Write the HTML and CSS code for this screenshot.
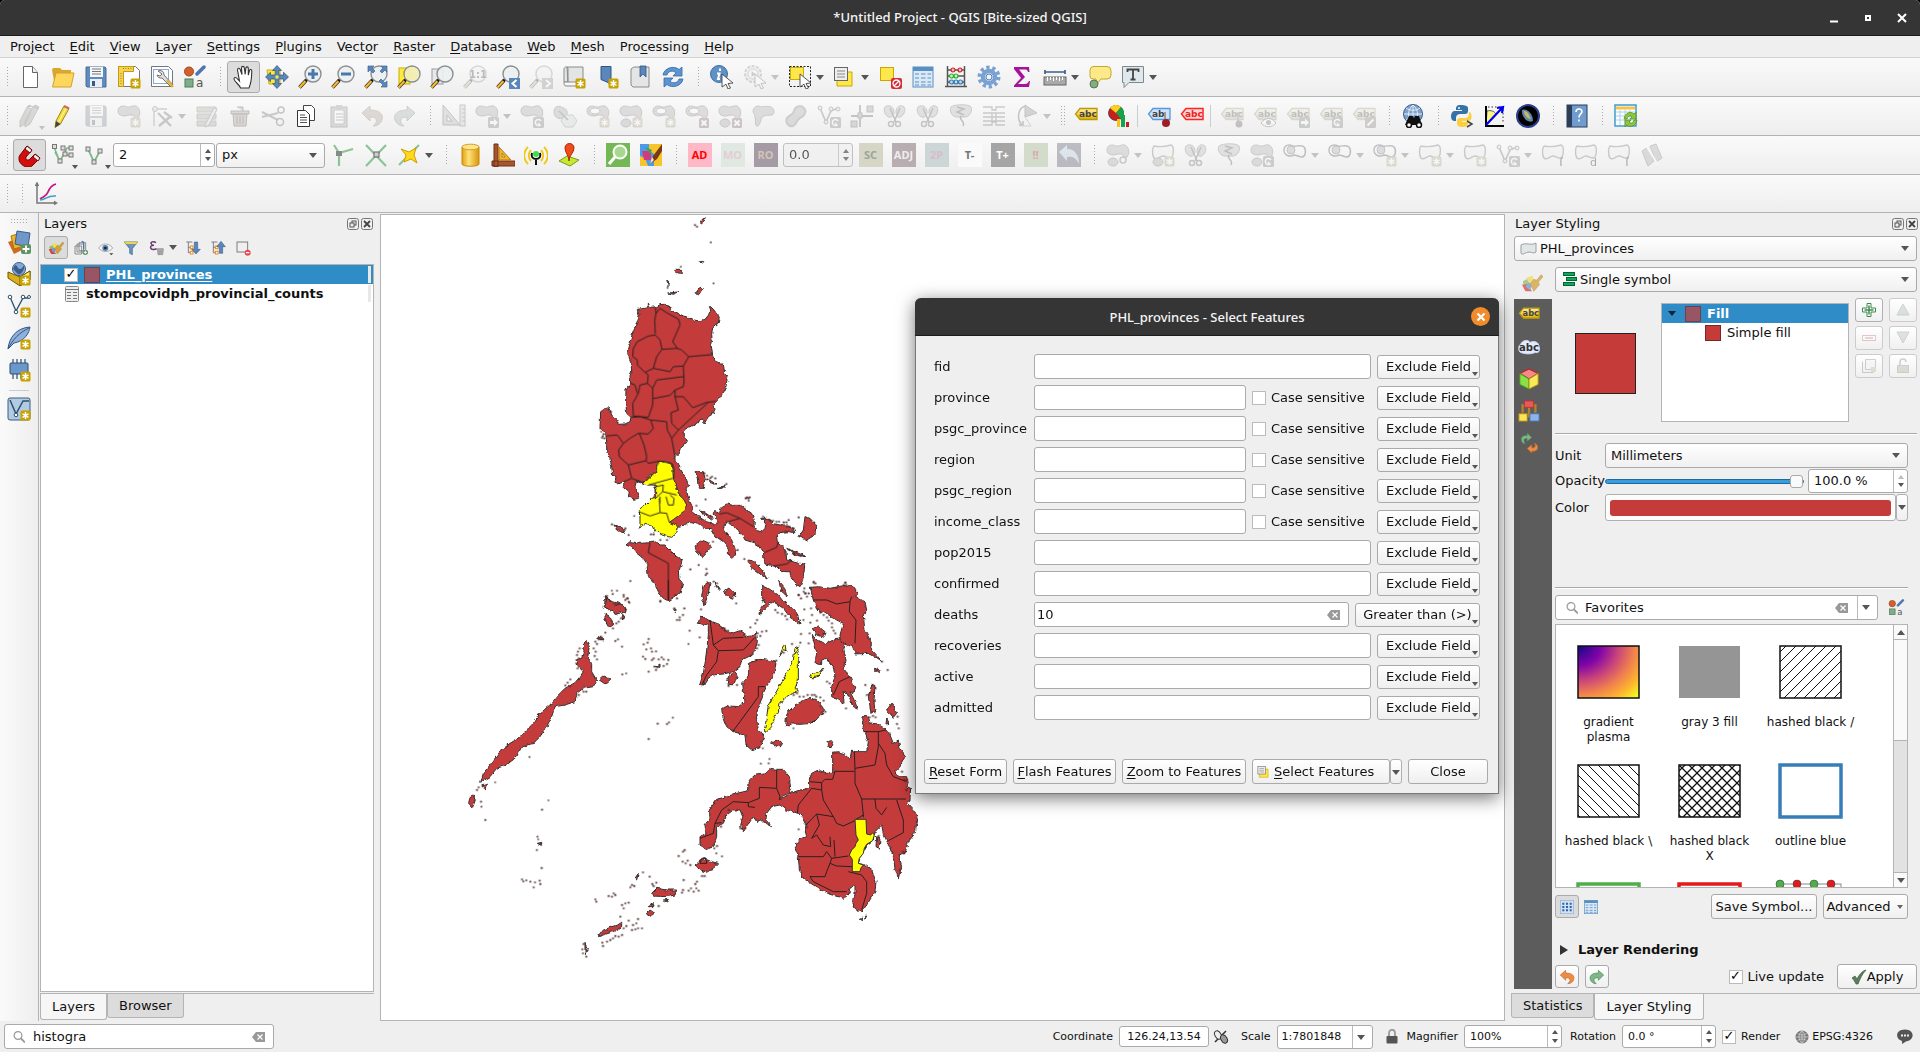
FILE: index.html
```html
<!DOCTYPE html>
<html lang="en">
<head>
<meta charset="utf-8">
<title>*Untitled Project - QGIS [Bite-sized QGIS]</title>
<link rel="stylesheet" href="styles.css">
</head>
<body>
<svg class="defs" aria-hidden="true">
<defs>
<linearGradient id="gy" x1="0" y1="0" x2="0" y2="1"><stop offset="0" stop-color="#fff0a8"/><stop offset="1" stop-color="#e0b000"/></linearGradient>
<linearGradient id="gcyl"><stop offset="0" stop-color="#e0a010"/><stop offset=".4" stop-color="#ffe27a"/><stop offset="1" stop-color="#d8960a"/></linearGradient>
<radialGradient id="plasma" cx="0" cy="0" r="1.35"><stop offset="0" stop-color="#15068a"/><stop offset=".28" stop-color="#8004a8"/><stop offset=".5" stop-color="#cb4679"/><stop offset=".68" stop-color="#f0804e"/><stop offset=".85" stop-color="#fdb42f"/><stop offset="1" stop-color="#f0f921"/></radialGradient>
<pattern id="hf" width="10" height="10" patternUnits="userSpaceOnUse"><path d="M-1 11L11 -1M-6 6L6 -6M4 16L16 4" stroke="#111" stroke-width="1"/></pattern>
<pattern id="hb" width="10" height="10" patternUnits="userSpaceOnUse"><path d="M-1 -1L11 11M-6 4L6 16M4 -6L16 6" stroke="#111" stroke-width="1"/></pattern>
<pattern id="hx" width="10" height="10" patternUnits="userSpaceOnUse"><path d="M-1 -1L11 11M-1 11L11 -1" stroke="#111" stroke-width="1.300"/></pattern>
</defs>
<symbol id="star" viewBox="0 0 24 24"><rect x="13.500" y="13.500" width="10" height="10" rx="1.500" fill="#c8a200"/><path d="M18.500 15v7M15.500 16.800l6 3.500M21.500 16.800l-6 3.500" stroke="#fff" stroke-width="1.500"/></symbol>
<symbol id="bx" viewBox="0 0 24 24"><rect x="14" y="14" width="10" height="10" rx="1.500" fill="#c84848"/><path d="M16.500 16.500l5 5M21.500 16.500l-5 5" stroke="#fff" stroke-width="2"/></symbol>
<symbol id="bmove" viewBox="0 0 24 24"><rect x="13" y="13" width="11" height="11" rx="1.500" fill="#6c7a70"/><path d="M15 17h4v-2.500l4 4-4 4V20h-4z" fill="#fff"/></symbol>
<symbol id="brot" viewBox="0 0 24 24"><rect x="13" y="13" width="11" height="11" rx="1.500" fill="#6c7a70"/><path d="M21 17a3 3 0 1 0-1 4l-2-2" stroke="#fff" stroke-width="1.500" fill="none"/></symbol>
<symbol id="bedit" viewBox="0 0 24 24"><rect x="13" y="13" width="11" height="11" rx="1.500" fill="#7a7a5c"/><path d="M15.500 21.500l6-6" stroke="#fff" stroke-width="2.200"/></symbol>
<symbol id="page" viewBox="0 0 24 24"><path d="M5.500 1.500h9l5 6v15h-14z" fill="#fff" stroke="#666"/><path d="M14.500 1.500v6h5" fill="#eee" stroke="#666"/></symbol>
<symbol id="folder" viewBox="0 0 24 24"><path d="M1 5l1-2h7l2 2h9v4l-16 12z" fill="#d9a72e"/><path d="M5 8h18l-3 14H1.500z" fill="#fdd65c" stroke="#d7a02a"/></symbol>
<symbol id="floppy" viewBox="0 0 24 24"><path d="M2 2h19l1 1v19H3l-1-1z" fill="#5f8cc0" stroke="#4a6d95"/><rect x="6" y="2" width="13" height="10" fill="#f4f6f8"/><path d="M8 4h9M8 6.500h9M8 9h9" stroke="#777" stroke-width="1.200"/><rect x="6" y="14" width="12" height="8" fill="#e9eef4"/><rect x="8" y="16" width="3" height="5" fill="#3c5a80"/></symbol>
<symbol id="layout" viewBox="0 0 24 24"><path d="M1.500 1.500h17l4 4v16h-21z" fill="#fff" stroke="#777"/><path d="M1.500 1.500h15v5h-10v15h-5z" fill="#f5d355" stroke="#c39a10"/><path d="M6 3.500h9M4 8v11" stroke="#a67c00" stroke-dasharray="1 1.500"/></symbol>
<symbol id="layouts" viewBox="0 0 24 24"><path d="M1.500 1.500h17l4 4v16h-21z" fill="#fff" stroke="#777"/><rect x="3.500" y="4.500" width="15" height="14" fill="none" stroke="#88aadd"/><path d="M8 6a4 4 0 0 1 6 4l9 10-2 2-9-9a4 4 0 0 1-5-3l3 1 2-2z" fill="#ddd" stroke="#555" stroke-width=".8"/><path d="M17 15l6 7" stroke="#e2b33a" stroke-width="2.500"/></symbol>
<symbol id="style" viewBox="0 0 24 24"><circle cx="6" cy="6.500" r="4.500" fill="#d2602d" stroke="#a04418"/><path d="M14 9l7-7" stroke="#4d77ae" stroke-width="3.500" stroke-linecap="round"/><rect x="2" y="14" width="8" height="8" fill="#7fae88" stroke="#4d7c57"/><text x="13" y="22" font-size="12" fill="#555">a</text></symbol>
<symbol id="hand" viewBox="0 0 24 24"><path d="M8.500 23c-.5-3-6-6-6.500-9 0-2 2-2 3.500 0l2 2L5.500 5c0-2 2-2.300 2.700-.5l1.800 5-.5-6.500c0-2 2.500-2.200 2.800-.2l.9 6.500.6-6c.3-2 2.500-1.800 2.500.2v6.500l1.200-4.500c.5-1.600 2.500-1.200 2.300.5C19.500 11 20 16 17 23z" fill="#fff" stroke="#333" stroke-width="1.100"/></symbol>
<symbol id="pan" viewBox="0 0 24 24"><path d="M2 5h13v14H4z" fill="#fdea3d" stroke="#c9ad00"/><path d="M12 .5l4.500 5h-2.700V10h4.700V7.200l5 4.800-5 4.800V14h-4.700v4.500h2.700l-4.500 5-4.500-5h2.700V14H5.500v2.800L.5 12l5-4.800V10h4.700V5.500H7.500z" fill="#5a86bb" stroke="#2f5682" stroke-width=".7"/><rect x="10.500" y="10.500" width="3" height="3" fill="#fdea3d"/></symbol>
<symbol id="lens" viewBox="0 0 24 24"><path d="M1.500 22.500l6.500-7" stroke="#333" stroke-width="3.600"/><path d="M1.500 22.500l6-6.500" stroke="#fbb829" stroke-width="2.200"/><path d="M7.500 16l2-2" stroke="#111" stroke-width="3"/><circle cx="15" cy="9" r="8" fill="#eceff0" fill-opacity=".9" stroke="#8a8f92" stroke-width="1.400"/></symbol>
<symbol id="plus" viewBox="0 0 24 24"><path d="M15 4v10M10 9h10" stroke="#4678ad" stroke-width="3"/></symbol>
<symbol id="minus" viewBox="0 0 24 24"><path d="M10 9h10" stroke="#4678ad" stroke-width="3"/></symbol>
<symbol id="full" viewBox="0 0 24 24"><path d="M4 1h6L8 3l3 3-2 2-3-3-2 2zM23 1v6l-2-2-3 3-2-2 3-3-2-2zM23 22h-6l2-2-4-4 2-2 4 4 2-2z" fill="#5a86bb" stroke="#3d6797" stroke-width=".7"/></symbol>
<symbol id="zsel" viewBox="0 0 24 24"><rect x="2" y="3" width="11" height="16" fill="#fdea3d" stroke="#c9ad00"/></symbol>
<symbol id="lensy" viewBox="0 0 24 24"><circle cx="15" cy="9" r="7" fill="#f6ec9a" fill-opacity=".7"/></symbol>
<symbol id="zlay" viewBox="0 0 24 24"><rect x="2" y="4" width="11" height="15" fill="#e8e8e8" stroke="#999"/></symbol>
<symbol id="lt" viewBox="0 0 24 24"><rect x="13" y="13" width="11" height="11" fill="#5a86bb"/><path d="M20.500 15l-4 3.500 4 3.500" fill="none" stroke="#fff" stroke-width="2"/></symbol>
<symbol id="gt" viewBox="0 0 24 24"><rect x="13" y="13" width="11" height="11" fill="#888"/><path d="M17 15l4 3.500-4 3.500" fill="none" stroke="#fff" stroke-width="2"/></symbol>
<symbol id="roll" viewBox="0 0 24 24"><path d="M5 2h16v18H6zM2 4c0-2 3-3 4-1v14H2z" fill="#e3e4e4" stroke="#8b8b8b"/><path d="M2 17h15c2 0 2 4 0 4H4c-2 0-2-2-2-4z" fill="#f6f6f6" stroke="#8b8b8b"/></symbol>
<symbol id="mark" viewBox="0 0 24 24"><path d="M6 1.500h10v19l-3-3-7-3z" fill="#5a86bb" stroke="#2f5682"/></symbol>
<symbol id="book" viewBox="0 0 24 24"><path d="M3 4l3-2h15v20H5l-2-2z" fill="#e3e5e6" stroke="#8b8b8b"/><path d="M12 1h6v11l-3-3-3 3z" fill="#5a86bb" stroke="#2f5682" stroke-width=".8"/></symbol>
<symbol id="refresh" viewBox="0 0 24 24"><path d="M2 10C3 3 13 0 18 4.500L21 2v9h-9l3-3.200C12 5 7 6 6 10z" fill="#5b93d3" stroke="#3a6ba5" stroke-width=".8"/><path d="M22 14c-1 7-11 10-16 5.500L3 22v-9h9l-3 3.200C12 19 17 18 18 14z" fill="#5b93d3" stroke="#3a6ba5" stroke-width=".8"/></symbol>
<symbol id="cur" viewBox="0 0 24 24"><path d="M12 9l11 9-5 .500 2.500 4.500-2.500 1-2-4.800-4 2.800z" fill="#fff" stroke="#444" stroke-width=".9"/></symbol>
<symbol id="info" viewBox="0 0 24 24"><circle cx="9" cy="9" r="8.500" fill="#5f91c7" stroke="#41709f"/><path d="M10 3.500v2.500M7 8.500h2.500L8 14h2" stroke="#fff" stroke-width="2" fill="none"/></symbol>
<symbol id="gear" viewBox="0 0 24 24"><circle cx="12" cy="12" r="9.500" fill="none" stroke="#7ba0d2" stroke-width="4" stroke-dasharray="3.200 2.770"/><circle cx="12" cy="12" r="6" fill="#fff" stroke="#7ba0d2" stroke-width="4.500"/><circle cx="12" cy="12" r="3" fill="#f4f4f4" stroke="#4d7dbb"/></symbol>
<symbol id="gear2" viewBox="0 0 24 24"><circle cx="10" cy="9" r="8" fill="#ddd" stroke="#888" stroke-width="2" stroke-dasharray="3 1.500"/><circle cx="10" cy="9" r="5" fill="#f6f6f6" stroke="#888"/><path d="M8.500 6l4 3-4 3z" fill="#777"/></symbol>
<symbol id="sel" viewBox="0 0 24 24"><rect x="1.500" y="1.500" width="21" height="20" fill="none" stroke="#222" stroke-dasharray="2 1.500"/><rect x="2.500" y="2.500" width="13" height="12" fill="#fde74c" stroke="#c9ad00"/></symbol>
<symbol id="selv" viewBox="0 0 24 24"><path d="M8 7h11v14H4V14z" fill="#fde74c" stroke="#c9a800"/><rect x="1.500" y="2.500" width="13" height="13" fill="#eee" stroke="#666"/><path d="M4 6h8M4 9h8M4 12h8" stroke="#888"/></symbol>
<symbol id="desel" viewBox="0 0 24 24"><rect x="2.500" y="2.500" width="13" height="13" fill="#fde74c" stroke="#c9a800"/><rect x="13" y="13" width="11" height="11" rx="2" fill="#d62b36"/><circle cx="18.500" cy="18.500" r="3.500" fill="none" stroke="#fff" stroke-width="1.300"/><path d="M16 21l5-5" stroke="#fff" stroke-width="1.300"/></symbol>
<symbol id="table" viewBox="0 0 24 24"><rect x="2" y="2" width="20" height="20" fill="#dbe8f5" stroke="#5a8fc4"/><path d="M2 4h20" stroke="#5a8fc4" stroke-width="4"/><path d="M4 9h4M10 9h4.500M16.500 9H20M4 13h4M10 13h4.500M16.500 13H20M4 17h4M10 17h4.500M16.500 17H20M4 20h4M10 20h4.500M16.500 20H20" stroke="#5a8fc4" stroke-width="1.200"/></symbol>
<symbol id="abacus" viewBox="0 0 24 24"><path d="M3.500 1v20M20.500 1v20M1 21.500h22M3 5h18M3 11h18M3 17h18" stroke="#555" stroke-width="1.500"/><g stroke-width="1.200"><g fill="#fbb" stroke="#c22"><circle cx="9" cy="5" r="2"/><circle cx="16" cy="5" r="2"/></g><g fill="#bfb" stroke="#3a3"><circle cx="7.500" cy="11" r="2"/><circle cx="12" cy="11" r="2"/></g><g fill="#bdf" stroke="#37a"><circle cx="7.500" cy="17" r="2"/><circle cx="12" cy="17" r="2"/><circle cx="16.500" cy="17" r="2"/></g></g></symbol>
<symbol id="sigma" viewBox="0 0 24 24"><path d="M4 2h15l.5 5H18c-.5-2-1.500-2.500-3-2.500H9L15 12l-7 7h7c2 0 3-1 4-3h1l-1 6H4v-1.500L11 13 4 4z" fill="#a6129b"/></symbol>
<symbol id="ruler" viewBox="0 0 24 24"><path d="M1.500 7h21M2 5v4M22 5v4" stroke="#3d5f8a" stroke-width="1.700"/><rect x="1" y="12" width="22" height="8" fill="#aaa" stroke="#666"/><path d="M4.500 12v4M7.500 12v3M10.500 12v4M13.500 12v3M16.500 12v4M19.500 12v3" stroke="#fff"/></symbol>
<symbol id="tip" viewBox="0 0 24 24"><path d="M5 1.500h14a4 4 0 0 1 4 4V10a4 4 0 0 1-4 4h-6l-5 6v-6H5a3 3 0 0 1-3-3V5a4 4 0 0 1 3-3.500z" fill="#fbe98a" stroke="#c6a828"/><circle cx="6" cy="19" r="4" fill="#7fb07f" stroke="#5f6f5f"/></symbol>
<symbol id="tnote" viewBox="0 0 24 24"><path d="M1.500 1.500h21v16H8l-5 5v-5H1.500z" fill="#dfe8ec" stroke="#7c8a90"/><path d="M6.500 7V4.500h11V7M12 4.500v10M9.500 14.500h5" stroke="#444" stroke-width="1.800" fill="none"/></symbol>
<symbol id="pencil" viewBox="0 0 24 24"><path d="M5 17L13 2l5 2.500L9.500 20 4 23.500z" fill="#f4dc3c" stroke="#9c8a20"/><path d="M15.500 3.500L7.500 18" stroke="#fff8b0"/><path d="M5 17l4.500 3L4 23.500z" fill="#444"/><path d="M13 2l5 2.500" stroke="#c66" stroke-width="2"/></symbol>
<symbol id="pencils" viewBox="0 0 24 24"><path d="M2 17L9 3l5 2L7 20l-5 3zM7 17l8-14 5 2-8 15-5 3z" fill="#997" stroke="#665"/><path d="M9 3l2-2 4 2M15 3l2-2 4 2-1 2" fill="#866" stroke="#655"/></symbol>
<symbol id="blob" viewBox="0 0 24 24"><path d="M1 7c0-5 5-6 9-4 3 1 5-2 9-1 4 2 5 8 2 12-2 2-4 0-4-2 0-1-3-1-5-1C7 13 1 12 1 7z" fill="#9aa69a" stroke="#586858"/></symbol>
<symbol id="vertex" viewBox="0 0 24 24"><path d="M4 5h13M4 5v17" stroke="#777" stroke-width="1.300"/><circle cx="5" cy="5" r="2.500" fill="#ccc" stroke="#666"/><path d="M8 9l13 13M21 12L9 22M14 8l8 6" stroke="#665" stroke-width="2.400"/></symbol>
<symbol id="multi" viewBox="0 0 24 24"><path d="M2 3h19v5H2zM2 10h19v5H2zM2 17h19v5H2z" fill="#aaa87a" stroke="#776"/><path d="M10 21l9-17 3 1-8 16-4 2z" fill="#ddd" stroke="#666"/></symbol>
<symbol id="trash" viewBox="0 0 24 24"><path d="M3 7h18v3H3zM5 10h14l-1 12H6zM9 3h6v4" fill="#c88" stroke="#733"/><path d="M9 12v8M12 12v8M15 12v8" stroke="#733"/></symbol>
<symbol id="cut" viewBox="0 0 24 24"><path d="M1 8l16 8M1 13l16-4" stroke="#666" stroke-width="2"/><circle cx="20" cy="6" r="3" fill="none" stroke="#844" stroke-width="1.500"/><circle cx="19" cy="18" r="3.500" fill="none" stroke="#844" stroke-width="1.500"/></symbol>
<symbol id="copy" viewBox="0 0 24 24"><path d="M9.500 1.500h8l3 3v12h-11z" fill="#fff" stroke="#444"/><path d="M3.500 6.500h8l4 4v12h-12z" fill="#fff" stroke="#333"/><path d="M6 11h5M6 13.500h7M6 16h7M6 18.500h7" stroke="#555"/></symbol>
<symbol id="paste" viewBox="0 0 24 24"><rect x="4" y="3" width="16" height="20" fill="#b99" stroke="#655"/><path d="M7 6h10v14H7z" fill="#fff" stroke="#777"/><path d="M9 1h6v4H9z" fill="#888"/><path d="M9 10h7M9 13h7M9 16h7" stroke="#666"/></symbol>
<symbol id="undo" viewBox="0 0 24 24"><path d="M2 9l8-7v4c9 0 14 4 12 10-1 3-4 6-9 6 5-4 5-9-3-9v4z" fill="#ed8a45" stroke="#c3692b"/></symbol>
<symbol id="redo" viewBox="0 0 24 24"><path d="M22 9l-8-7v4C5 6 0 10 2 16c1 3 4 6 9 6-5-4-5-9 3-9v4z" fill="#7db787" stroke="#4f8a5b"/></symbol>
<symbol id="setsq" viewBox="0 0 24 24"><path d="M1 1l17 20H1zM5 11v6h5z" fill="#caa" fill-rule="evenodd" stroke="#555"/><rect x="18" y="1" width="5" height="21" fill="#ccc" stroke="#666"/><path d="M20 5h3M20 9h3M20 13h3M20 17h3" stroke="#666"/></symbol>
<symbol id="hex" viewBox="0 0 24 24"><path d="M1 8c0-6 5-7 9-4 4 0 6 6 2 9-3 3-11 2-11-5z" fill="#9aa69a" stroke="#586858"/><path d="M12 11h8l4 6-4 6h-8l-4-6z" fill="#ccd6e0" stroke="#789"/><path d="M6 7l9 9" stroke="#456" stroke-width="1.500"/></symbol>
<symbol id="hole" viewBox="0 0 24 24"><ellipse cx="9" cy="7" rx="5" ry="3" fill="#fff" stroke="#586858"/></symbol>
<symbol id="blob2" viewBox="0 0 24 24"><ellipse cx="7" cy="19" rx="5" ry="4" fill="#9aa69a" stroke="#586858"/></symbol>
<symbol id="bend" viewBox="0 0 24 24"><path d="M2 8c0-6 5-7 9-5 4-1 12-2 12 5 0 5-6 2-10 4-4 1-3 10-7 10-3 0 0-10-4-14z" fill="#9aa69a" stroke="#586858"/></symbol>
<symbol id="bean" viewBox="0 0 24 24"><path d="M3 14c-2 4 1 9 6 8 4-1 3-6 7-8 5-2 7-7 4-10-4-4-9-1-10 3-1 4-5 4-7 7z" fill="#9aa69a" stroke="#776" stroke-width="2"/></symbol>
<symbol id="vnet" viewBox="0 0 24 24"><path d="M3 4l6 14 5-11 7-3" stroke="#586858" stroke-width="1.700" fill="none"/><g fill="#ddd" stroke="#555"><circle cx="3" cy="4" r="2"/><circle cx="9" cy="18" r="2"/><circle cx="14" cy="5" r="2"/><circle cx="21" cy="5" r="2"/></g></symbol>
<symbol id="cross" viewBox="0 0 24 24"><path d="M10 1v22M1 12h22" stroke="#555" stroke-width="1.800"/><g fill="#999" stroke="#555"><rect x="8" y="9" width="4" height="5"/><rect x="17" y="2" width="6" height="6"/><rect x="1" y="17" width="6" height="6"/></g></symbol>
<symbol id="split" viewBox="0 0 24 24"><path d="M2 3c4-3 9 0 9 5 0 4-3 6-5 5-4-1-6-7-4-10zM21 3c-4-3-8 0-8 5 0 4 2 6 4 5 4-1 6-7 4-10z" fill="#aab6aa" stroke="#586858"/><path d="M7 4l6 14M17 4l-6 14" stroke="#555" stroke-width="1.600"/><circle cx="8" cy="20" r="2.500" fill="none" stroke="#755" stroke-width="1.500"/><circle cx="15" cy="20" r="2.500" fill="none" stroke="#755" stroke-width="1.500"/></symbol>
<symbol id="merge" viewBox="0 0 24 24"><path d="M2 3c4-3 18-3 20 0 2 4-2 10-6 10l-8 0C3 13 0 7 2 3z" fill="#aab6aa" stroke="#586858"/><path d="M8 3l7 2-7 3 7 3M12 12c-3 4 5 5 2 10" stroke="#444" stroke-width="1.400" fill="none"/></symbol>
<symbol id="mattr" viewBox="0 0 24 24"><path d="M1 3h9v3h4V3h9M1 9h22M1 13h22M1 17h22M1 21h9v-3h4v3h9M10 9v8M14 9v8" stroke="#666" stroke-width="1.300" fill="none"/></symbol>
<symbol id="rotp" viewBox="0 0 24 24"><path d="M10 2C2 5 2 16 7 21M4 21h4v-4" fill="none" stroke="#555" stroke-width="1.500"/><path d="M10 1l12 8-12 4z" fill="#888" stroke="#555"/><path d="M10 13l6 9H5" fill="none" stroke="#888"/></symbol>
<symbol id="abc" viewBox="0 0 24 24"><path d="M6 4.500h17v11H6L1.500 10z" fill="url(#gy)" stroke="#bc9800" stroke-width="1.300"/><text x="5" y="13" font-size="9" font-weight="bold" fill="#444">abc</text></symbol>
<symbol id="abcb" viewBox="0 0 24 24"><path d="M6 4.500h17v11H6L1.500 10z" fill="#cde3fb" stroke="#5a96d8" stroke-width="1.300"/><text x="5" y="13" font-size="9" font-weight="bold" fill="#444">ab</text><path d="M18 8v10" stroke="#999" stroke-width="2"/><circle cx="19" cy="19" r="4" fill="#9c1f24"/></symbol>
<symbol id="abcr" viewBox="0 0 24 24"><path d="M6 4.500h17v11H6L1.500 10z" fill="#ffd6d6" stroke="#f22" stroke-width="1.500"/><text x="5" y="13" font-size="9" font-weight="bold" fill="#e22">abc</text></symbol>
<symbol id="pie" viewBox="0 0 24 24"><circle cx="9" cy="9" r="7.500" fill="#c61f1f" stroke="#333" stroke-width=".7"/><path d="M9 9L3 4a7.500 7.500 0 0 1 11-1z" fill="#fbd21c"/><path d="M9 9l5-6a7.500 7.500 0 0 1 0 12z" fill="#16a34a"/><path d="M11.500 23v-8" stroke="#fbbf1c" stroke-width="3"/><path d="M16 23V11" stroke="#16a34a" stroke-width="4"/><path d="M20.500 23v-5" stroke="#c61f1f" stroke-width="3"/></symbol>
<symbol id="pin" viewBox="0 0 24 24"><path d="M18 8v10" stroke="#777" stroke-width="2"/><circle cx="19" cy="20" r="3.500" fill="#844"/></symbol>
<symbol id="eye" viewBox="0 0 24 24"><path d="M8 19c4-6 11-6 15 0-4 5-11 5-15 0z" fill="#fff" stroke="#555"/><circle cx="15.500" cy="18.500" r="2.500" fill="#567"/></symbol>
<symbol id="search3" viewBox="0 0 24 24"><circle cx="12" cy="10" r="9.500" fill="#7da2cc" stroke="#3a5c86"/><path d="M3 10h18M12 1v18M5 4c4 3 10 3 14 0M5 16c4-3 10-3 14 0M12 1c-6 5-6 13 0 18M12 1c6 5 6 13 0 18" fill="none" stroke="#e4eefa"/><path d="M8 12h4l1 2 1-2h4l3 9H4z" fill="#111"/><g fill="#fff" stroke="#111" stroke-width="1.500"><circle cx="8" cy="21" r="2.500"/><circle cx="18" cy="21" r="2.500"/></g></symbol>
<symbol id="python" viewBox="0 0 24 24"><path d="M11 1c-5 0-5 2-5 5h6v1H4c-4 1-4 10 0 10h2v-3c0-3 2-4 4-4h5c2 0 3-1 3-3V4c0-2-3-3-7-3z" fill="#3572a5"/><path d="M12 23c5 0 6-2 6-5h-6v-1h7c4-1 3-9 0-9v2c0 3-2 4-4 4h-5c-2 0-3 1-3 3v3c0 2 2 3 5 3z" fill="#fccf3e"/><circle cx="9" cy="4" r="1" fill="#fff"/><path d="M17 17l5 3-5 3" fill="none" stroke="#444" stroke-width="1.500"/></symbol>
<symbol id="axis" viewBox="0 0 24 24"><path d="M3 21l1-14c4-1 7 0 9 3z" fill="#fdf486" stroke="#333" stroke-width=".8"/><path d="M3 2v20h18" stroke="#000" stroke-width="2" fill="none"/><path d="M5 3h15v16" stroke="#333" stroke-dasharray="1.500 2" fill="none"/><path d="M3 21L20 3M14 4l6-1-1 6" stroke="#00e" stroke-width="2.200" fill="none"/></symbol>
<symbol id="globe" viewBox="0 0 24 24"><circle cx="12" cy="12" r="11" fill="#000" stroke="#2b3f8c" stroke-width="2"/><path d="M6 6c5-2 11 4 11 11-6 3-12-5-11-11z" fill="#5c87a8"/><path d="M8 7c4 0 5 4 7 8-4 0-7-4-7-8z" fill="#c8b56a"/></symbol>
<symbol id="help" viewBox="0 0 24 24"><rect x="2" y="1" width="20" height="22" fill="#6f9bce" stroke="#2a3f57"/><path d="M4.500 1v22" stroke="#2a3f57" stroke-width="5"/><path d="M11 8c0-4 6-4 6-.500 0 2.500-3 2.500-3 6M14 15.500v2" stroke="#fff" stroke-width="1.600" fill="none"/></symbol>
<symbol id="tref" viewBox="0 0 24 24"><rect x="1" y="1" width="21" height="21" fill="#fff" stroke="#3e9cc9" stroke-width="1.500"/><path d="M2 4h19" stroke="#f6c34d" stroke-width="3"/><path d="M2 8h19M2 12h19M2 16h19M6 6v15M11 6v15M16 6v15" stroke="#a8d2ec"/><path d="M10 15c1-7 7-8 10-5l2-2v7h-6l2-2c-2-2-4-1-5 2zM23 16c-1 6-7 8-10 5l-2 2v-7h6l-2 2c2 2 4 1 5-2z" fill="#8cc63f" stroke="#5b9122" stroke-width=".8"/></symbol>
<symbol id="magnet" viewBox="0 0 24 24"><path d="M2 12l7-9 5 4-6 7c-1 3 2 4 4 2l5-5 5 4-8 8C6 27-2 18 2 12z" fill="#d40d0d" stroke="#700"/><path d="M9 3l5 4-2 3-5-4zM17 11l5 4-2 3-5-4z" fill="#eee" stroke="#700"/></symbol>
<symbol id="snapn" viewBox="0 0 24 24"><path d="M3 4l6 15 4-9M4 9l5 9 7-13 6 0M13 12h8" stroke="#7fb88b" stroke-width="1.600" fill="none"/><g fill="#ddd" stroke="#777"><rect x="1.500" y="1.500" width="4" height="4"/><rect x="7" y="16" width="4" height="4"/><rect x="10" y="3" width="4" height="4"/><rect x="18" y="3" width="4" height="4"/><rect x="12" y="9" width="4" height="4"/><rect x="18" y="10" width="4" height="4"/></g></symbol>
<symbol id="snapv" viewBox="0 0 24 24"><path d="M4 6l6 13 6-11" stroke="#7fb88b" stroke-width="1.800" fill="none"/><g fill="#ddd" stroke="#777"><rect x="2" y="4" width="4" height="4"/><rect x="8" y="17" width="4" height="4"/><rect x="14" y="6" width="4" height="4"/></g></symbol>
<symbol id="t1" viewBox="0 0 24 24"><path d="M3 2l5 8v13M8 10l14-4" stroke="#8cc397" stroke-width="2.200" fill="none"/><rect x="5" y="8" width="6" height="5" fill="#888"/></symbol>
<symbol id="t2" viewBox="0 0 24 24"><path d="M2 2l20 21M22 2L2 23" stroke="#8cc397" stroke-width="2.200"/><rect x="10" y="9" width="5" height="5" fill="#ccc" stroke="#666"/></symbol>
<symbol id="t3" viewBox="0 0 24 24"><path d="M2 22L22 2" stroke="#8cc397" stroke-width="2.200"/><path d="M4 6l8 3 7-4-2 7 3 8-6-4-7 3 2-7z" fill="#ffd91a" stroke="#d19c00"/></symbol>
<symbol id="cyl" viewBox="0 0 24 24"><path d="M4 4v17c0 3 17 3 17 0V4z" fill="url(#gcyl)" stroke="#c98a08"/><ellipse cx="12.500" cy="4" rx="8.500" ry="2.800" fill="#ffe58f" stroke="#d79f1f"/></symbol>
<symbol id="tsq" viewBox="0 0 24 24"><path d="M3 1h4v23H3zM1 18h23v5H1z" fill="#a9542f" stroke="#6e3018"/><path d="M8 17V4l12 13zM11 14h3l-3-4z" fill="#f2b52c" fill-rule="evenodd" stroke="#b07b0c"/></symbol>
<symbol id="radio" viewBox="0 0 24 24"><path d="M7 7c-3 3-3 8 0 11M4 4c-5 5-5 12 0 17M17 7c3 3 3 8 0 11M20 4c5 5 5 12 0 17" fill="none" stroke="#f2c60f" stroke-width="1.800"/><path d="M12 22v-6c-4 0-5-3-4-6M12 16c4 0 5-3 4-6" fill="none" stroke="#111" stroke-width="2"/><circle cx="12" cy="11" r="3" fill="#3ee04a"/></symbol>
<symbol id="gps" viewBox="0 0 24 24"><path d="M2 18l8-5 12 4-9 6z" fill="#c5e832" stroke="#7d9c12"/><path d="M12 18c0-6-4-8-4-13 0-6 9-6 9 0 0 5-5 7-5 13z" fill="#ef4c1a" stroke="#aa2a06"/></symbol>
<symbol id="gfind" viewBox="0 0 24 24"><rect x="0" y="0" width="24" height="24" fill="#74b856"/><circle cx="14" cy="9" r="6.500" fill="#a6d890" stroke="#fff" stroke-width="2"/><path d="M9 14l-6 7" stroke="#fff" stroke-width="3"/></symbol>
<symbol id="osm" viewBox="0 0 24 24"><rect x="1" y="1" width="22" height="22" fill="#f7c52b"/><path d="M1 1h9v6l5 4v12h-6l-3-8-5-2z" fill="#4c9ae8"/><path d="M3 8h9v9H5z" fill="#d33a7c"/><path d="M6 4l7 3-2 4z" fill="#3da548"/><path d="M23 1l-9 12-3 8 7-5 5-8z" fill="#7b3a16"/><path d="M13 14l2 3-4 4z" fill="#f6e6b0"/></symbol>
<symbol id="bigundo" viewBox="0 0 24 24"><rect width="24" height="24" fill="#667"/><path d="M2 9l8-7v4c8 0 12 6 12 15-3-6-6-8-12-7v4z" fill="#bcd"/></symbol>
<symbol id="plot" viewBox="0 0 24 24"><path d="M3 2v19h19M1.500 4L3 1l1.500 3M20 19.500l2.500 1.500-2.500 1.500" fill="none" stroke="#777" stroke-width="1.500"/><path d="M6 17c4-3 6-2 8-7s4-7 8-8" fill="none" stroke="#c71585" stroke-width="1.800"/><path d="M6 18c6 0 7-5 16-4" fill="none" stroke="#3c9fc0" stroke-width="1.500"/></symbol>
<symbol id="poly2" viewBox="0 0 24 24"><path d="M3 3c5 1 10 1 17-1 3 1 3 8 1 12-2 3-6-1-9-1s-7 5-9 2C1 12 1 5 3 3z" fill="#eee" stroke="#666" stroke-width="1.400"/></symbol>
<symbol id="blobs" viewBox="0 0 24 24"><path d="M1 7c0-5 5-6 9-4 3 1 8-2 11 1 3 4 1 10-2 10-3 0-5-2-8-2-4 2-10 1-10-5z" fill="none" stroke="#444" stroke-width="1.400"/><circle cx="8" cy="7" r="4" fill="#9aa69a" stroke="#555"/></symbol>
<symbol id="cutlog" viewBox="0 0 24 24"><path d="M2 8l6-4 6 14-6 5zM10 3l6-2 6 14-6 4z" fill="#99a099" stroke="#666"/><path d="M6 2l12 20" stroke="#fff" stroke-width="2"/></symbol>
<symbol id="dsm" viewBox="0 0 24 24"><path d="M1 12l8-3 6 11-8 4z" fill="#d2691e"/><path d="M4 6l9-3 4 13-10 3z" fill="#f0b429" stroke="#a87808"/><path d="M10 1l13 2-2 14-13-3z" fill="#6f97c8" stroke="#3c5d88"/><rect x="14" y="14" width="10" height="10" rx="2" fill="#5c9468"/><path d="M19 15.500v7M15.500 19h7" stroke="#fff" stroke-width="1.800"/></symbol>
<symbol id="gpkg" viewBox="0 0 24 24"><path d="M1 10l12 5 10-6v9l-10 6-12-8z" fill="#dbb019" stroke="#6d5606"/><path d="M13 15v9l10-6V9z" fill="#fbf06a" stroke="#6d5606"/><circle cx="12" cy="7" r="6.500" fill="#86a9d6" stroke="#3c5d88"/><path d="M8 3c3 0 2 4 5 4s3-4 4-3-1 7-4 8-5-4-7-5z" fill="#3c5d88"/></symbol>
<symbol id="shp" viewBox="0 0 24 24"><path d="M3 3l6 14 7-13h6" stroke="#2e4f6e" stroke-width="1.300" fill="none"/><g fill="#fff" stroke="#2e4f6e"><circle cx="3" cy="3" r="1.800"/><circle cx="9" cy="18" r="1.800"/><circle cx="16" cy="3" r="1.800"/><circle cx="22" cy="3" r="1.500"/></g></symbol>
<symbol id="feather" viewBox="0 0 24 24"><path d="M1 23C2 12 9 2 23 1c-1 6-5 14-16 16z" fill="#8db0dc" stroke="#33557e"/><path d="M1 23C6 13 12 7 22 2" stroke="#33557e" fill="none"/></symbol>
<symbol id="chip" viewBox="0 0 24 24"><path d="M6 1v20M10 1v20M14 1v20M18 1v20" stroke="#2e4f6e" stroke-width="1.200"/><rect x="3" y="5" width="18" height="11" rx="1" fill="#6a97cc" stroke="#2e4f6e"/></symbol>
<symbol id="virt" viewBox="0 0 24 24"><rect x="1" y="1" width="22" height="22" rx="2" fill="#b2cbe5" stroke="#3c5d78"/><path d="M3 3l6 14 7-13h6" stroke="#2e4f6e" stroke-width="1.500" fill="none"/><circle cx="9" cy="18" r="1.800" fill="#fff" stroke="#2e4f6e"/></symbol>
<symbol id="brush" viewBox="0 0 24 24"><path d="M2 10l6-3 3 4-1 7-6 2z" fill="#8fbf6a"/><path d="M6 6l7-2 1 7-5 3z" fill="#f3dc5a"/><path d="M1 14l6-1 5 8-7 0z" fill="#dd4038"/><path d="M8 11l4 3-2 6-5-4z" fill="#6b9cd8"/><path d="M10 13l4-5 3 1 5-6 2 2-5 6 1 3-6 7z" fill="#d2a23c" stroke="#a57b26" stroke-width=".6"/></symbol>
<symbol id="addgrp" viewBox="0 0 24 24"><path d="M3 9h10v12H3zM6 6h10v12H6zM9 4h10v12H9z" fill="none" stroke="#777" stroke-width="1.200"/><path d="M13 2c2 0 3 1 3 3v9" fill="none" stroke="#4678ad" stroke-width="2"/><circle cx="18.500" cy="18.500" r="4" fill="#5c9468"/><path d="M18.500 16v5M16 18.500h5" stroke="#fff" stroke-width="1.400"/></symbol>
<symbol id="eyeb" viewBox="0 0 24 24"><path d="M1 12c5-8 16-8 21 0-5 7-16 7-21 0z" fill="#f4f4f4" stroke="#888"/><circle cx="11" cy="12" r="4.500" fill="#5a7fae"/><circle cx="11" cy="12" r="2" fill="#123"/><path d="M17 20h6l-3 3z" fill="#444"/></symbol>
<symbol id="funnel" viewBox="0 0 24 24"><path d="M2 3h20l-8 10v9l-4-2v-7z" fill="#6a93c4" stroke="#3c6391"/><path d="M2 3h20l-2 3H4z" fill="#fbe96a" stroke="#ab9a28" stroke-width=".8"/></symbol>
<symbol id="eps" viewBox="0 0 24 24"><path d="M12 4C8 1 3 3 5 6c1 2 4 2 4 2s-6 0-5 4c1 3 6 3 9 1" fill="none" stroke="#67366e" stroke-width="2.200"/><path d="M14 13h9l-1 9h-3v-5h-1v5h-3z" fill="#aaa" stroke="#888"/></symbol>
<symbol id="exp" viewBox="0 0 24 24"><path d="M2 3h9M5 3v16h6M5 11h6" stroke="#777" stroke-width="1.400" fill="none"/><g fill="#fff" stroke="#f08a1d" stroke-width="1.500"><rect x="8" y="9" width="4" height="4"/><rect x="8" y="17" width="4" height="4"/></g><path d="M14 3h5v11h4l-6.500 7L10 14h4z" fill="#5a86bb" stroke="#2f5682" stroke-width=".8"/></symbol>
<symbol id="col" viewBox="0 0 24 24"><path d="M2 3h9M5 3v16h6M5 11h6" stroke="#777" stroke-width="1.400" fill="none"/><g fill="#fff" stroke="#f08a1d" stroke-width="1.500"><rect x="8" y="9" width="4" height="4"/><rect x="8" y="17" width="4" height="4"/></g><path d="M14 20h5V10h4l-6.500-8L10 10h4z" fill="#5a86bb" stroke="#2f5682" stroke-width=".8"/></symbol>
<symbol id="rem" viewBox="0 0 24 24"><rect x="3" y="3" width="16" height="15" fill="none" stroke="#777" stroke-width="1.400"/><circle cx="19" cy="19" r="4.500" fill="#e8484e"/><path d="M16.500 19h5" stroke="#fff" stroke-width="1.800"/></symbol>
<symbol id="float" viewBox="0 0 12 12"><rect x=".5" y=".5" width="11" height="11" rx="2" fill="none" stroke="#777"/><rect x="5" y="3" width="4" height="4" fill="none" stroke="#555"/><rect x="3" y="5" width="4" height="4" fill="#eee" stroke="#555"/></symbol>
<symbol id="closex" viewBox="0 0 12 12"><rect x=".5" y=".5" width="11" height="11" rx="2" fill="none" stroke="#777"/><path d="M3 3l6 6M9 3l-6 6" stroke="#444" stroke-width="1.800"/></symbol>
<symbol id="clear" viewBox="0 0 13 10"><path d="M4 0h9v10H4L0 5z" fill="#999"/><path d="M5.500 2.500l5 5M10.500 2.500l-5 5" stroke="#fff" stroke-width="1.200"/></symbol>
<symbol id="mag" viewBox="0 0 12 12"><circle cx="5" cy="4.500" r="3.900" fill="none" stroke="#999" stroke-width="1.200"/><path d="M8 7.500l4 4" stroke="#999" stroke-width="1.800"/></symbol>
<symbol id="sheet" viewBox="0 0 14 16"><rect x=".5" y=".5" width="13" height="15" rx="1" fill="#eee" stroke="#888"/><path d="M.5 3.500h13M2 6.500h4M8 6.500h4M2 9.500h4M8 9.500h4M2 12.500h4M8 12.500h4" stroke="#777"/></symbol>
<symbol id="cloud" viewBox="0 0 24 24"><path d="M3 18c-3-1-3-8 0-9 1-4 8-6 10-2 4-2 10-1 10 5 2 4-1 7-4 6-5 2-11 2-16 0z" fill="#e3ebfb" stroke="#cfdcf6"/><text x="1" y="16" font-size="11" font-weight="bold" fill="#333">abc</text></symbol>
<symbol id="cube" viewBox="0 0 24 24"><path d="M12 1l10 5-10 6L2 6z" fill="#f28a8a" stroke="#c41f1f" stroke-width="1.300"/><path d="M2 6v12l10 5V12z" fill="#8be04a" stroke="#3f9a16"/><path d="M22 6v12l-10 5V12z" fill="#f9ea5a" stroke="#ab8d0a"/></symbol>
<symbol id="tree" viewBox="0 0 24 24"><path d="M12 5v14M5 14V6h14v8" fill="none" stroke="#b9802a" stroke-width="2.500"/><rect x="7" y="1" width="10" height="7" fill="#e55a5a" stroke="#b33"/><rect x="1" y="15" width="9" height="8" fill="#fbe35a" stroke="#b48c10"/><rect x="13" y="15" width="10" height="8" fill="#8ab4ea" stroke="#4a74a8"/></symbol>
<symbol id="hist" viewBox="0 0 24 24"><path d="M5 12C1 6 6 3 10 4V1l5 5-5 4V7C7 7 5 8 8 13z" fill="#7db787" stroke="#4f8a5b" stroke-width=".7"/><path d="M18 12c6 3 4 10-3 9l0 2-5-5 5-4v3c3 1 5-1 3-5z" fill="#ed8a45" stroke="#c3692b" stroke-width=".7"/></symbol>
<symbol id="single" viewBox="0 0 14 15"><g fill="#0aa858" stroke="#056334"><rect x=".5" y=".5" width="11" height="3"/><rect x="3.500" y="5.500" width="10" height="3"/><rect x=".5" y="10.500" width="11" height="3"/></g></symbol>
<symbol id="pg" viewBox="0 0 17 13"><path d="M1 3c5-3 10 1 15-2v9c-3 2-4 0-7 0s-7 4-8 1z" fill="#e3e6e6" stroke="#9a9f9f"/></symbol>
<symbol id="check" viewBox="0 0 16 16"><path d="M1 9l3-2 2 3c2-4 5-8 9-9-4 4-6 9-8 14H5C4 13 3 11 1 9z" fill="#5c7d5c" stroke="#3d5a3d" stroke-width=".7"/></symbol>
</svg>

<div class="app">
<header class="titlebar">
<span class="wtitle">*Untitled Project - QGIS [Bite-sized QGIS]</span>
<div class="winbtns">
<button aria-label="Minimize"><svg viewBox="0 0 10 10"><path d="M1 8.500h8" stroke="#fff" stroke-width="2"/></svg></button>
<button aria-label="Maximize"><svg viewBox="0 0 10 10"><rect x="3" y="3" width="4" height="4" fill="none" stroke="#fff" stroke-width="2"/></svg></button>
<button aria-label="Close window"><svg viewBox="0 0 10 10"><path d="M1 1l8 8M9 1L1 9" stroke="#fff" stroke-width="2"/></svg></button>
</div>
</header>
<nav class="menubar">
<a href="#">Pro<u>j</u>ect</a><a href="#"><u>E</u>dit</a><a href="#"><u>V</u>iew</a><a href="#"><u>L</u>ayer</a><a href="#"><u>S</u>ettings</a><a href="#"><u>P</u>lugins</a><a href="#">Vect<u>o</u>r</a><a href="#"><u>R</u>aster</a><a href="#"><u>D</u>atabase</a><a href="#"><u>W</u>eb</a><a href="#"><u>M</u>esh</a><a href="#">Pro<u>c</u>essing</a><a href="#"><u>H</u>elp</a>
</nav>

<div class="toolbar">
<i class="grip"></i>
<button class="tb" aria-label="New"><svg><use href="#page"/></svg></button>
<button class="tb" aria-label="Open"><svg><use href="#folder"/></svg></button>
<button class="tb" aria-label="Save"><svg><use href="#floppy"/></svg></button>
<button class="tb" aria-label="New layout"><svg><use href="#layout"/><use href="#star"/></svg></button>
<button class="tb" aria-label="Layout manager"><svg><use href="#layouts"/></svg></button>
<button class="tb" aria-label="Style manager"><svg><use href="#style"/></svg></button>
<i class="grip"></i>
<button class="tb on" aria-label="Pan"><svg><use href="#hand"/></svg></button>
<button class="tb" aria-label="Pan to selection"><svg><use href="#pan"/></svg></button>
<button class="tb" aria-label="Zoom in"><svg><use href="#lens"/><use href="#plus"/></svg></button>
<button class="tb" aria-label="Zoom out"><svg><use href="#lens"/><use href="#minus"/></svg></button>
<button class="tb" aria-label="Zoom full"><svg><use href="#lens"/><use href="#full"/></svg></button>
<button class="tb" aria-label="Zoom to selection"><svg><use href="#zsel"/><use href="#lens"/><use href="#lensy"/></svg></button>
<button class="tb" aria-label="Zoom to layer"><svg><use href="#zlay"/><use href="#lens"/></svg></button>
<button class="tb dim" aria-label="Native resolution"><svg><use href="#lens"/><text x="6" y="13" font-size="10" font-weight="bold" fill="#333">1:1</text></svg></button>
<button class="tb" aria-label="Zoom last"><svg><use href="#lens"/><use href="#lt"/></svg></button>
<button class="tb dim" aria-label="Zoom next"><svg><use href="#lens"/><use href="#gt"/></svg></button>
<button class="tb" aria-label="New map view"><svg><use href="#roll"/><use href="#star"/></svg></button>
<button class="tb" aria-label="New bookmark"><svg><use href="#mark"/><use href="#star"/></svg></button>
<button class="tb" aria-label="Bookmarks"><svg><use href="#book"/></svg></button>
<button class="tb" aria-label="Refresh"><svg><use href="#refresh"/></svg></button>
<i class="grip"></i>
<button class="tb" aria-label="Identify"><svg><use href="#info"/><use href="#cur"/></svg></button>
<button class="tb drop dim" aria-label="Actions"><svg><use href="#gear2"/><use href="#cur"/></svg></button>
<button class="tb drop" aria-label="Select features"><svg><use href="#sel"/><use href="#cur"/></svg></button>
<button class="tb drop" aria-label="Select by value"><svg><use href="#selv"/></svg></button>
<button class="tb" aria-label="Deselect"><svg><use href="#desel"/></svg></button>
<button class="tb" aria-label="Attribute table"><svg><use href="#table"/></svg></button>
<button class="tb" aria-label="Field calculator"><svg><use href="#abacus"/></svg></button>
<button class="tb" aria-label="Toolbox"><svg><use href="#gear"/></svg></button>
<button class="tb" aria-label="Statistics summary"><svg><use href="#sigma"/></svg></button>
<button class="tb drop" aria-label="Measure"><svg><use href="#ruler"/></svg></button>
<button class="tb" aria-label="Map tips"><svg><use href="#tip"/></svg></button>
<button class="tb drop" aria-label="Text annotation"><svg><use href="#tnote"/></svg></button>
</div>

<div class="toolbar">
<i class="grip"></i>
<button class="tb dim sub" aria-label="Current edits"><svg><use href="#pencils"/></svg></button>
<button class="tb" aria-label="Toggle editing"><svg><use href="#pencil"/></svg></button>
<button class="tb dim" aria-label="Save edits"><svg><use href="#floppy"/></svg></button>
<button class="tb dim" aria-label="Add polygon"><svg><use href="#blob"/><use href="#star"/></svg></button>
<button class="tb drop dim" aria-label="Vertex tool"><svg><use href="#vertex"/></svg></button>
<button class="tb dim" aria-label="Modify attributes"><svg><use href="#multi"/></svg></button>
<button class="tb dim" aria-label="Delete selected"><svg><use href="#trash"/></svg></button>
<button class="tb dim" aria-label="Cut"><svg><use href="#cut"/></svg></button>
<button class="tb" aria-label="Copy"><svg><use href="#copy"/></svg></button>
<button class="tb dim" aria-label="Paste"><svg><use href="#paste"/></svg></button>
<button class="tb dim" aria-label="Undo"><svg><use href="#undo"/></svg></button>
<button class="tb dim" aria-label="Redo"><svg><use href="#redo"/></svg></button>
<i class="grip"></i>
<button class="tb dim" aria-label="Advanced digitizing"><svg><use href="#setsq"/></svg></button>
<button class="tb drop dim" aria-label="Move feature"><svg><use href="#blob"/><use href="#bmove"/></svg></button>
<button class="tb dim" aria-label="Rotate feature"><svg><use href="#blob"/><use href="#brot"/></svg></button>
<button class="tb dim" aria-label="Simplify"><svg><use href="#hex"/></svg></button>
<button class="tb dim" aria-label="Add ring"><svg><use href="#blob"/><use href="#hole"/><use href="#star"/></svg></button>
<button class="tb dim" aria-label="Add part"><svg><use href="#blob"/><use href="#blob2"/><use href="#star"/></svg></button>
<button class="tb dim" aria-label="Fill ring"><svg><use href="#blob"/><use href="#hole"/><use href="#star"/></svg></button>
<button class="tb dim" aria-label="Delete ring"><svg><use href="#blob"/><use href="#hole"/><use href="#bx"/></svg></button>
<button class="tb dim" aria-label="Delete part"><svg><use href="#blob"/><use href="#blob2"/><use href="#bx"/></svg></button>
<button class="tb dim" aria-label="Reshape"><svg><use href="#bend"/></svg></button>
<button class="tb dim" aria-label="Offset curve"><svg><use href="#bean"/></svg></button>
<button class="tb dim" aria-label="Reverse line"><svg><use href="#vnet"/><use href="#brot"/></svg></button>
<button class="tb dim" aria-label="Trim"><svg><use href="#cross"/></svg></button>
<button class="tb dim" aria-label="Split features"><svg><use href="#split"/></svg></button>
<button class="tb dim" aria-label="Split parts"><svg><use href="#split"/></svg></button>
<button class="tb dim" aria-label="Merge features"><svg><use href="#merge"/></svg></button>
<button class="tb dim" aria-label="Merge attributes"><svg><use href="#mattr"/></svg></button>
<button class="tb drop dim" aria-label="Rotate symbols"><svg><use href="#rotp"/></svg></button>
<i class="grip thin"></i>
<button class="tb" aria-label="Labels"><svg><use href="#abc"/></svg></button>
<button class="tb" aria-label="Diagrams"><svg><use href="#pie"/></svg></button>
<i class="sep"></i>
<button class="tb" aria-label="Pinned labels"><svg><use href="#abcb"/></svg></button>
<button class="tb" aria-label="Unplaced labels"><svg><use href="#abcr"/></svg></button>
<i class="sep"></i>
<button class="tb dim" aria-label="Pin labels"><svg><use href="#abc"/><use href="#pin"/></svg></button>
<button class="tb dim" aria-label="Show labels"><svg><use href="#abc"/><use href="#eye"/></svg></button>
<button class="tb dim" aria-label="Move label"><svg><use href="#abc"/><use href="#bmove"/></svg></button>
<button class="tb dim" aria-label="Rotate label"><svg><use href="#abc"/><use href="#brot"/></svg></button>
<button class="tb dim" aria-label="Change label"><svg><use href="#abc"/><use href="#bedit"/></svg></button>
<i class="grip"></i>
<button class="tb" aria-label="MetaSearch"><svg><use href="#search3"/></svg></button>
<i class="grip"></i>
<button class="tb" aria-label="Python console"><svg><use href="#python"/></svg></button>
<button class="tb" aria-label="Azimuth"><svg><use href="#axis"/></svg></button>
<button class="tb" aria-label="Globe"><svg><use href="#globe"/></svg></button>
<i class="grip"></i>
<button class="tb" aria-label="Help contents"><svg><use href="#help"/></svg></button>
<i class="grip"></i>
<button class="tb" aria-label="Refresh table"><svg><use href="#tref"/></svg></button>
</div>

<div class="toolbar">
<i class="grip"></i>
<button class="tb on" aria-label="Snapping"><svg><use href="#magnet"/></svg></button>
<button class="tb sub" aria-label="Snap layers"><svg><use href="#snapn"/></svg></button>
<button class="tb sub" aria-label="Snap type"><svg><use href="#snapv"/></svg></button>
<span class="spin s-tol"><input aria-label="Tolerance" value="2"><span><button aria-label="Up"></button><button aria-label="Down"></button></span></span>
<span class="combo c-px"><select aria-label="Tolerance unit"><option>px</option></select></span>
<button class="tb" aria-label="Topological editing"><svg><use href="#t1"/></svg></button>
<button class="tb" aria-label="Snap on intersection"><svg><use href="#t2"/></svg></button>
<button class="tb drop" aria-label="Tracing"><svg><use href="#t3"/></svg></button>
<i class="grip"></i>
<button class="tb" aria-label="Database"><svg><use href="#cyl"/></svg></button>
<button class="tb" aria-label="Square"><svg><use href="#tsq"/></svg></button>
<button class="tb" aria-label="Signal"><svg><use href="#radio"/></svg></button>
<button class="tb" aria-label="Location"><svg><use href="#gps"/></svg></button>
<i class="grip"></i>
<button class="tb" aria-label="Find"><svg><use href="#gfind"/></svg></button>
<button class="tb" aria-label="Map download"><svg><use href="#osm"/></svg></button>
<i class="grip"></i>
<button class="tb tx"><b class="t-ad">AD</b></button>
<button class="tb tx"><b class="t-mo">MO</b></button>
<button class="tb tx"><b class="t-ro">RO</b></button>
<span class="spin s-rot off"><input aria-label="Angle" value="0.0" disabled><span><button aria-label="Up"></button><button aria-label="Down"></button></span></span>
<button class="tb tx"><b class="t-sc">SC</b></button>
<button class="tb tx"><b class="t-adj">ADJ</b></button>
<button class="tb tx"><b class="t-2p">2P</b></button>
<button class="tb tx"><b class="t-tm">T-</b></button>
<button class="tb tx"><b class="t-tp">T+</b></button>
<button class="tb tx"><b class="t-ex">!!</b></button>
<button class="tb" aria-label="Step back"><svg class="half"><use href="#bigundo"/></svg></button>
<i class="grip"></i>
<button class="tb drop dim" aria-label="Split polygon"><svg><use href="#blob"/><use href="#blob2"/><circle cx="17" cy="17" r="3" fill="none" stroke="#a55" stroke-width="1.500"/></svg></button>
<button class="tb dim" aria-label="Split by lines"><svg><use href="#poly2"/><use href="#blob2"/><use href="#star"/></svg></button>
<button class="tb dim" aria-label="Scissors"><svg><use href="#split"/></svg></button>
<button class="tb dim" aria-label="Stitch"><svg><use href="#merge"/></svg></button>
<button class="tb dim" aria-label="Autofill"><svg><use href="#blob"/><use href="#blob2"/><use href="#brot"/></svg></button>
<button class="tb drop dim" aria-label="Intersection"><svg><use href="#blobs"/></svg></button>
<button class="tb drop dim" aria-label="Difference"><svg><use href="#blobs"/></svg></button>
<button class="tb drop dim" aria-label="Union"><svg><use href="#blobs"/><use href="#star"/></svg></button>
<button class="tb drop dim" aria-label="Buffer"><svg><use href="#poly2"/><use href="#star"/></svg></button>
<button class="tb dim" aria-label="Clip"><svg><use href="#poly2"/><use href="#star"/></svg></button>
<button class="tb drop dim" aria-label="Node lock"><svg><use href="#vnet"/><use href="#brot"/></svg></button>
<button class="tb dim" aria-label="Polygon f"><svg><use href="#poly2"/><path d="M22 15c-3-1-2 3-2 8" stroke="#333" stroke-width="1.500" fill="none"/></svg></button>
<button class="tb dim" aria-label="Polygon d"><svg><use href="#poly2"/><text x="16" y="23" font-size="11">d</text></svg></button>
<button class="tb dim" aria-label="Polygon shift"><svg><use href="#poly2"/><path d="M22 15c-3-1-2 3-2 8" stroke="#333" stroke-width="1.500" fill="none"/></svg></button>
<button class="tb dim" aria-label="Cut log"><svg><use href="#cutlog"/></svg></button>
</div>

<div class="toolbar last">
<i class="grip"></i><i class="grip"></i>
<button class="tb" aria-label="Plot"><svg><use href="#plot"/></svg></button>
</div>

<main class="main">
<aside class="side">
<i class="hgrip"></i>
<button aria-label="Data source manager"><svg><use href="#dsm"/></svg></button>
<button aria-label="New GeoPackage"><svg><use href="#gpkg"/><use href="#star"/></svg></button>
<button aria-label="New Shapefile"><svg><use href="#shp"/><use href="#star"/></svg></button>
<button aria-label="New SpatiaLite"><svg><use href="#feather"/><use href="#star"/></svg></button>
<button aria-label="New memory layer"><svg><use href="#chip"/><use href="#star"/></svg></button>
<i class="hsep"></i>
<button aria-label="New virtual layer"><svg><use href="#virt"/><use href="#star"/></svg></button>
</aside>

<section class="layers">
<div class="ptitle"><span>Layers</span><button aria-label="Float"><svg><use href="#float"/></svg></button><button aria-label="Close panel"><svg><use href="#closex"/></svg></button></div>
<div class="ptools">
<button class="on" aria-label="Open styling"><svg><use href="#brush"/></svg></button>
<button aria-label="Add group"><svg><use href="#addgrp"/></svg></button>
<button aria-label="Map themes"><svg><use href="#eyeb"/></svg></button>
<button aria-label="Filter legend"><svg><use href="#funnel"/></svg></button>
<button class="drop" aria-label="Filter by expression"><svg><use href="#eps"/></svg></button>
<button aria-label="Expand all"><svg><use href="#exp"/></svg></button>
<button aria-label="Collapse all"><svg><use href="#col"/></svg></button>
<button aria-label="Remove layer"><svg><use href="#rem"/></svg></button>
</div>
<div class="ltree">
<div class="lrow cur"><input type="checkbox" checked aria-label="PHL_provinces visible"><i class="swm"></i><span class="nm">PHL_provinces</span><i class="ind"></i></div>
<div class="lrow"><svg class="sheet"><use href="#sheet"/></svg><span>stompcovidph_provincial_counts</span><i class="ind"></i></div>
</div>
<div class="tabs ltabs"><button class="act">Layers</button><button>Browser</button></div>
</section>

<section class="canvas">
<svg class="map" viewBox="381 215 1123 805" preserveAspectRatio="xMinYMin meet">
<defs><filter id="rough" x="0" y="0" width="100%" height="100%"><feTurbulence type="fractalNoise" baseFrequency=".22" numOctaves="2" seed="4"/><feDisplacementMap in="SourceGraphic" scale="4" xChannelSelector="R" yChannelSelector="G"/></filter></defs>
<g filter="url(#rough)">
<g class="land" transform="translate(560 210) scale(.33333)">
<path d="M232 298L245 296 258 294 266 282 272 292 290 290 300 284 312 283 322 290 335 300 355 310 370 318 385 322 400 330 420 333 435 328 445 316 452 300 448 290 452 290 462 300 470 312 478 325 474 340 458 354 455 370 456 385 452 400 456 420 458 435 466 450 478 462 490 462 492 475 495 492 505 495 500 515 498 530 488 550 478 565 468 577 462 585 465 598 458 612 445 620 432 642 430 630 420 632 405 642 390 650 375 658 368 668 372 680 382 688 375 700 362 712 356 730 345 738 345 752 355 760 360 775 372 795 380 815 390 828 378 835 383 855 390 875 397 890 395 905 415 920 440 935 460 942 475 938 470 925 458 915 462 905 478 910 485 890 500 882 520 886 540 886 555 896 575 910 583 930 582 948 592 962 605 966 615 955 618 940 605 925 622 925 640 940 660 945 680 945 700 958 705 968 685 965 660 968 650 980 652 995 670 1010 678 1025 680 1050 700 1052 722 1065 735 1060 732 1085 728 1110 720 1130 705 1120 692 1100 690 1085 665 1085 650 1070 615 1062 612 1045 610 1025 600 1010 580 998 555 990 545 970 525 955 505 935 495 940 490 955 500 970 515 990 525 1015 527 1035 515 1045 505 1035 505 1015 490 995 465 978 455 960 430 955 410 940 395 935 375 945 340 952 300 950 270 900 285 850 285 825 250 820 230 812 225 830 235 850 236 865 222 868 205 860 208 845 190 830 192 815 175 822 165 820 168 800 158 795 155 770 148 740 140 725 140 695 137 668 120 655 122 605 140 592 150 600 155 615 168 628 175 643 195 642 210 635 213 622 200 610 197 575 198 540 212 520 210 500 215 480 212 455 203 430 210 400 216 375 228 345 238 315Z"/>
<path d="M198 1005L210 995 240 1000 270 998 290 995 300 1005 315 1005 330 1020 350 1040 367 1050 358 1080 360 1110 368 1120 360 1150 345 1160 325 1173 310 1165 295 1145 285 1120 265 1100 260 1060 250 1045 230 1030 215 1012Z"/>
<path d="M405 1010L425 990 445 998 452 1012 430 1040 410 1025ZM735 920L750 925 768 945 765 975 740 990 717 980 730 960ZM562 1050L580 1052 605 1080 622 1108 600 1092 572 1070ZM655 1110L672 1130 683 1160 665 1145ZM405 785L430 785 435 805 430 835 418 835 415 805ZM420 898L460 925 455 930 430 912ZM162 945L190 955 195 970 172 962ZM343 178L365 178 367 193 350 192ZM420 232L430 235 415 255 408 248ZM418 152L430 156 424 162ZM436 23L425 42 420 38ZM320 208L326 215 324 227ZM326 249L357 246 340 253ZM680 1015L740 1040 705 1035ZM475 832L493 828 488 834ZM445 808L468 822 455 822ZM132 1160L160 1175 190 1185 200 1200 140 1195Z"/>
</g>
<g class="land" transform="translate(450 580) scale(.33333)">
<path d="M92 607L100 580 120 555 150 515 180 490 200 478 215 465 250 430 270 400 300 375 320 350 345 325 375 308 390 290 400 275 385 260 378 240 395 235 402 210 400 190 410 182 418 200 412 235 425 250 425 275 440 300 430 320 400 325 380 340 375 365 345 375 315 380 305 410 290 440 270 470 250 490 215 500 200 530 170 555 140 565 120 590Z"/>
<path d="M60 650L68 645 76 660 68 682 56 670ZM95 618L112 612 108 630ZM448 300L462 288 482 298 465 312ZM468 52L490 70 525 80 528 95 500 102 480 90 462 80ZM465 100L480 110 490 135 478 142 465 120ZM440 175L455 170 462 180ZM515 100L524 110 518 120ZM262 790L275 787 275 797Z"/>
<path d="M742 130L755 108 775 120 800 130 820 145 840 162 870 152 885 160 885 170 905 168 920 158 922 185 915 215 900 228 875 240 870 260 850 275 820 282 790 285 768 300 758 318 750 312 760 280 765 250 770 210 775 165 775 135Z"/>
<path d="M835 290L855 275 862 290 850 315 832 312Z"/>
<path d="M895 250L930 238 965 242 978 250 970 290 950 318 940 340 930 370 918 400 922 430 925 450 944 470 930 500 905 510 888 495 885 465 850 455 830 440 818 410 815 385 835 378 865 380 885 365 880 330 878 305 895 290Z"/>
<path d="M1010 405L1015 395 1035 375 1060 362 1080 352 1105 365 1120 385 1118 405 1100 415 1085 430 1050 433 1025 432 1007 438ZM965 490L985 478 998 490 990 502ZM1130 485L1145 482 1152 495 1140 502Z"/>
<path d="M1085 162L1100 180 1125 192 1150 180 1180 175 1182 210 1188 240 1180 265 1200 290 1215 325 1212 340 1200 335 1215 365 1222 385 1210 380 1195 345 1180 335 1182 370 1165 360 1145 350 1145 320 1155 290 1150 260 1130 235 1115 240 1115 255 1095 250 1100 215Z"/>
<path d="M1080 22L1105 20 1140 25 1175 18 1205 15 1222 38 1215 50 1245 65 1250 90 1240 105 1245 150 1265 190 1262 205 1295 243 1260 220 1215 222 1208 200 1175 190 1170 165 1180 130 1150 115 1125 100 1100 85 1090 60Z"/>
<path d="M935 15L955 25 970 35 985 45 1000 65 1040 95 1050 132 1020 112 1000 85 970 65 955 75 925 108 930 90 945 70 935 50ZM1090 145L1105 138 1125 155 1120 172 1100 165ZM765 10L780 8 775 40 762 80 758 60 755 45ZM820 38L840 25 858 42 845 57ZM795 8L808 28 800 25Z"/>
<path d="M1235 410L1255 410 1260 428 1290 435 1308 450 1320 465 1330 490 1345 480 1350 505 1365 530 1350 560 1335 575 1345 590 1370 590 1375 610 1370 620 1382 625 1380 660 1370 668 1395 695 1403 720 1395 760 1375 785 1365 820 1345 825 1355 860 1345 895 1335 865 1330 830 1318 800 1300 760 1295 735 1275 755 1270 780 1250 795 1235 820 1225 850 1245 855 1265 870 1278 905 1275 935 1250 975 1235 995 1215 985 1205 960 1215 945 1215 915 1200 925 1195 945 1180 955 1130 940 1090 915 1060 895 1048 870 1045 830 1035 805 1045 780 1070 770 1065 750 1068 735 1055 710 1045 700 1010 690 990 675 965 680 950 700 948 720 965 740 945 730 935 720 920 725 910 710 890 740 880 755 872 740 878 710 870 690 850 690 830 705 820 730 800 740 800 770 790 800 770 808 750 795 750 770 768 760 765 735 780 715 778 690 800 658 830 650 860 640 895 632 898 600 915 585 945 582 960 565 980 568 1000 568 1018 590 1022 625 1015 640 995 650 990 660 1020 640 1050 630 1080 625 1078 600 1085 580 1105 570 1130 580 1148 580 1148 520 1165 518 1185 525 1200 538 1205 510 1215 515 1250 515 1255 485 1240 445Z"/>
<path d="M1280 770L1290 775 1288 805 1278 800ZM1265 315L1275 320 1272 360 1275 400 1262 395 1255 350ZM1325 370L1340 400 1330 412 1310 390ZM1310 415L1318 430 1308 432ZM1270 265L1292 270 1285 278ZM735 855L760 835 785 845 805 850 790 865 770 877 750 870ZM605 940L620 925 650 930 680 930 675 945 650 950 610 948ZM445 1070L460 1050 500 1035 515 1025 515 1040 490 1055 460 1065ZM405 1090L412 1105 405 1125ZM555 895L565 880 560 900ZM590 1000L600 990 615 1000 600 1006ZM1228 1018L1238 1014 1235 1022ZM1243 1010L1250 1008 1245 1018ZM595 980L610 970 608 980ZM640 960L655 958 650 966ZM618 260L630 252 630 262ZM670 85L680 90 676 98Z"/>
<path class="pick" d="M1035 205L1048 198 1040 215 1045 240 1045 300 1035 325 1045 335 1025 340 1010 350 990 370 985 395 975 410 965 440 948 458 943 450 950 410 955 375 970 350 985 325 1000 300 1015 270 1030 240ZM1080 285L1100 280 1118 265 1108 288 1085 294ZM1000 200L1006 196 1008 215 1000 212 988 230Z"/>
</g>
<g class="land" transform="translate(560 210) scale(.33333)"><path class="pick" d="M290 765L300 753 315 757 330 757 338 765 340 805 350 830 355 850 368 862 380 885 370 905 345 925 328 937 355 950 350 970 335 982 305 975 300 965 285 965 275 945 255 940 240 955 240 915 235 900 255 885 275 865 290 862 290 845 285 825 265 825 250 818 275 795 290 785Z"/></g>
</g>
<g class="lines" transform="translate(560 210) scale(.33333)"><path d="M286 292L288 310 284 330 286 372M288 310L300 295 320 308 356 328 360 345 338 395 352 415M352 415L306 418 300 390 286 375 265 378 232 395 220 415 218 440 232 450 232 465 255 487 280 475 290 440 306 418M352 415L365 420 386 440 455 434M386 440L370 468 340 470 330 485 280 475M370 468L372 515 370 530 345 540 330 556 278 566 278 535 290 510 370 500M255 487L265 495 262 520 278 535M262 520L240 525 235 550 218 580 220 618 265 622 278 585 278 566M212 520L225 525 232 550M345 540L345 560 370 560 398 593 440 577 468 574M345 560L355 600 333 608 335 640 355 660 445 577M213 622L240 620 272 630 280 655 265 672 235 670 210 685 190 700 172 675 138 678M272 630L320 635 322 660 335 685 355 660M335 685L345 740M190 700L176 720 178 740 205 765 258 752 260 740 252 705 238 670M258 752L265 760 300 753 338 762M205 765L215 805 250 818M215 805L192 815M338 762L342 805M265 1028L270 998M265 1028L325 1060V1172M478 912L500 908 540 925 580 950M505 935L540 925M612 1028L650 1012 655 995M640 1068L680 1062 695 1050M265 825L338 805M288 830L310 825 308 845 290 862M308 845L350 855M298 865L300 908 270 918 236 905M300 908L320 910 328 937M318 860L325 885 340 885 342 865 330 855M300 880L300 860"/></g>
<g class="lines" transform="translate(450 580) scale(.33333)"><path d="M655 0V62M780 120L790 195 805 212 800 245 770 285 758 310M790 195L820 175 880 172M805 212L880 210 915 172M848 455L925 350 925 320 945 320M1090 60L1130 60 1160 72 1200 65 1205 50M1200 65L1198 95 1218 120 1215 190M1150 345L1168 305 1200 290M1240 455L1285 455 1308 450M1285 455L1285 500 1275 555 1215 565 1213 515M1285 490L1305 520 1310 555 1330 590 1370 605M1215 565L1215 610 1235 657 1368 657M1235 657L1240 705 1215 720M1148 598L1155 574 1213 574M1078 605L1115 608 1125 598 1148 598M1115 608L1115 630 1085 625 1045 675 1042 700M1115 630L1120 660 1150 710 1100 702 1068 735M1150 710L1160 730 1180 738 1215 722M1240 705L1240 712M1275 657L1278 685 1295 705 1310 682M1340 660L1360 720 1360 758 1315 782M1100 702L1108 735 1085 775 1100 765 1120 795 1142 800 1140 770M1045 830L1120 830 1130 815 1145 835 1195 828M1145 835L1140 850 1130 875 1125 890 1080 890 1090 905 1150 935 1190 935M1140 850L1160 858 1207 860M1195 875L1235 885 1250 905 1250 940 1235 990M1152 780L1155 830M980 568V625L928 622 928 655 895 668 850 665 815 690 795 730 790 760 750 775M895 668L895 680 915 682M795 730L815 728M988 660L990 650 980 625M750 850L755 835 768 835 770 850 750 850"/></g>
<g class="land" transform="translate(450 580) scale(.33333)"><path class="pick" d="M1215 718L1248 718 1250 762 1262 765 1268 758 1273 765 1268 782 1250 793 1243 805 1240 820 1228 835 1225 850 1240 855 1232 865 1230 875 1207 875 1207 838 1198 825 1205 810 1215 800 1218 790 1225 780 1218 765Z"/></g>
<g class="dots" transform="translate(560 210) scale(.33333)"><path d="M452 97h1M460 220h1M362 170h1M322 233h1M404 45h8M410 50h2M123 665h1M130 672h2M125 683h2M132 685h2M128 678h1M145 596h3M152 605h3M432 790h6M440 797h6M455 800h8M440 808h3M450 804h5M465 805h2M498 822h2M556 865h10M560 862h12M565 872h4M436 868h1M408 887h2M222 918h1M155 943h3M195 955h4M205 975h4M272 973h12M300 990h4M320 990h3M608 920h3M630 932h12M648 935h14M670 937h12M685 930h4M680 950h12M715 922h2M700 955h4M458 995h2M415 1065h6M438 1077h6M440 1090h3M390 1078h3M436 1095h2M210 1113h2M532 1020h2M552 1047h5M170 1142h2M157 1152h2M190 1160h2M202 1165h4M205 1175h3M345 1155h3M350 1165h4M300 1172h6M342 1195h3M372 1195h2M715 1155h4M730 1145h4M735 1150h3M722 1165h3M745 1150h2M760 1115h4M765 1120h6M855 1118h6M850 1125h10M528 1180h1M685 1018h6M700 1028h12M720 1038h5"/></g>
<g class="dots" transform="translate(450 580) scale(.33333)"><path d="M470 48h3M485 32h1M520 45h2M530 55h2M537 68h2M525 60h4M505 125h4M512 115h4M498 130h3M488 145h3M465 158h5M452 170h8M445 178h10M435 185h6M440 192h3M430 205h3M436 215h3M433 228h6M440 238h3M388 205h4M383 215h3M380 225h4M385 235h3M378 250h4M382 265h4M360 298h4M352 308h6M345 316h4M358 318h3M400 335h10M385 345h6M495 183h5M503 178h3M515 200h2M580 193h2M595 177h5M592 188h3M588 208h2M602 205h3M605 215h3M617 214h2M578 230h3M585 237h4M610 235h2M605 240h2M625 238h3M634 232h2M640 238h4M654 240h2M650 252h2M640 258h4M612 260h2M595 275h3M617 270h3M620 262h2M516 283h4M528 280h1M622 431h3M650 432h6M656 427h4M668 413h1M595 477h2M238 531h1M295 661h1M275 689h3M105 720h3M94 680h1M92 665h2M135 607h1M80 630h4M85 622h6M262 770h1M264 778h1M260 810h1M274 864h2M215 898h2M219 904h5M228 901h2M240 905h3M254 907h2M250 922h2M268 902h2M270 912h2M435 958h3M438 965h6M475 948h4M485 950h8M495 945h4M490 940h2M515 975h4M520 985h3M535 968h6M525 970h3M545 915h4M552 918h6M540 922h2M578 877h6M598 890h4M606 912h8M618 908h3M610 918h3M625 978h4M685 828h3M698 815h2M703 810h2M697 845h8M706 850h6M712 842h4M720 855h3M700 900h2M698 930h4M695 938h3M715 932h6M722 925h4M735 912h4M740 905h2M738 925h4M730 935h6M745 932h6M755 888h10M800 798h8M792 805h4M815 829h3M798 820h3M510 1010h3M520 1045h8M528 1038h4M535 1022h2M545 1050h4M555 1048h5M563 1045h4M575 1045h3M563 1017h3M558 1030h2M548 1035h3M480 1080h5M488 1075h4M495 1068h3M470 1085h4M456 1088h6M458 1098h4M398 1120h2M400 1092h2M396 1108h2M408 1130h2M515 1065h3M505 1070h3M718 152h2M715 192h1M748 172h2M680 120h14M698 105h4M688 112h4M752 88h3M915 130h3M920 120h2M900 142h2M922 160h8M930 168h8M935 155h4M948 153h3M925 195h6M920 205h4M1060 120h1M1085 105h6M1080 128h5M1062 88h6M1082 85h4M1065 40h2M1045 45h4M1062 25h3M1070 50h3M1110 98h4M1120 105h4M1130 112h8M1135 122h6M1145 130h4M1100 122h4M1145 142h6M1150 152h8M1155 160h5M1078 160h2M1052 162h2M1025 192h2M1075 190h2M1050 188h3M1030 345h6M1040 340h6M1048 350h3M1060 350h8M1072 345h8M1085 345h10M1098 350h8M1110 352h3M1120 362h4M938 505h1M958 537h1M932 551h1M955 550h3M1125 395h2M1187 385h3M1245 315h2M1250 345h3M1258 412h6M1268 408h4M1276 412h4M1312 270h2M1295 245h3M1342 410h2M1340 432h3M1345 445h2M1318 460h4M1355 575h2M1362 600h10M1368 630h8M1045 748h4M1070 742h4M870 745h4M885 745h6M835 690h4M812 740h2M1358 815h6M1362 820h3M978 242h2M1000 218h2M1130 305h2M1138 310h2M1030 445h1M1285 768h3M1090 8h8M1185 8h6M835 318h3M860 315h2M790 5h2M800 10h2M630 65h6M815 145h14M825 152h10M975 90h4M982 98h4M995 102h5M1005 108h5M1010 118h4"/></g>
</svg>
</section>

<aside class="dock">
<div class="ptitle"><span>Layer Styling</span><button aria-label="Float"><svg><use href="#float"/></svg></button><button aria-label="Close panel"><svg><use href="#closex"/></svg></button></div>
<span class="combo c-layer"><svg class="ci17"><use href="#pg"/></svg><select aria-label="Layer"><option>PHL_provinces</option></select></span>
<div class="styler">
<div class="vtabs">
<button class="act" aria-label="Symbology"><svg><use href="#brush"/></svg></button>
<button aria-label="Labels"><svg><use href="#abc"/></svg></button>
<button aria-label="Masks"><svg><use href="#cloud"/></svg></button>
<button aria-label="3D view"><svg><use href="#cube"/></svg></button>
<button aria-label="Diagrams"><svg><use href="#tree"/></svg></button>
<button aria-label="History"><svg><use href="#hist"/></svg></button>
</div>
<div class="sbody">
<span class="combo c-sym"><svg class="ci14"><use href="#single"/></svg><select aria-label="Renderer"><option>Single symbol</option></select></span>
<div class="symrow">
<div class="prev"><i></i></div>
<div class="stree"><div class="sr cur"><i class="tri"></i><i class="swm"></i><b>Fill</b></div><div class="sr ch"><i class="sw"></i><span>Simple fill</span></div></div>
<div class="sbtns">
<button aria-label="Add"><svg viewBox="0 0 16 16"><path d="M6 1.500h4v4.500h4.500v4H10v4.500H6V10H1.500V6H6z" fill="#fff" stroke="#3f8a4c"/><path d="M8 3.500v9M3.500 8h9" stroke="#3f8a4c" stroke-width="1.500"/></svg></button>
<button aria-label="Move up" class="dimb"><svg viewBox="0 0 16 16"><path d="M8 2l6 11H2z" fill="#9aa" stroke="#677"/></svg></button>
<button aria-label="Remove" class="dimb"><svg viewBox="0 0 16 16"><rect x="1.500" y="5.500" width="13" height="5" fill="#fff" stroke="#b55"/><path d="M4 8h8" stroke="#b55" stroke-width="1.500"/></svg></button>
<button aria-label="Move down" class="dimb"><svg viewBox="0 0 16 16"><path d="M8 13l6-11H2z" fill="#9aa" stroke="#677"/></svg></button>
<button aria-label="Duplicate" class="dimb"><svg viewBox="0 0 16 16"><path d="M1.500 3.500v11h11M4.500 1.500h10v10h-10z" fill="#eee" stroke="#666"/><rect x="10" y="9" width="5" height="5" fill="#aa8"/></svg></button>
<button aria-label="Lock" class="dimb"><svg viewBox="0 0 16 16"><path d="M5 7V4c0-4 6-4 6 0" fill="none" stroke="#666" stroke-width="1.500"/><rect x="2.500" y="7.500" width="11" height="7" fill="#a98" stroke="#776"/></svg></button>
</div>
</div>
<hr>
<div class="props">
<label for="unit">Unit</label><span class="combo"><select id="unit"><option>Millimeters</option></select></span>
<label for="opac">Opacity</label><div class="oprow"><input type="range" id="opac" min="0" max="100" value="100"><span class="spin s-op"><input aria-label="Opacity percent" value="100.0 %"><span><button aria-label="Up" class="fade"></button><button aria-label="Down"></button></span></span></div>
<label for="color">Color</label><div class="colrow"><button id="color" class="colbtn"><i></i></button><button class="mini" aria-label="Color menu"></button></div>
</div>
<div class="stretch"></div>
<hr class="short">
<div class="favrow"><span class="combo fav"><svg class="mg"><use href="#mag"/></svg><input aria-label="Symbol filter" value="Favorites"><svg class="clr"><use href="#clear"/></svg><i class="dv"></i></span><button class="plain" aria-label="Style manager"><svg viewBox="0 0 24 24"><use href="#style"/></svg></button></div>
<div class="gallery">
<div class="gal">
<figure><svg viewBox="0 0 66 56"><rect x="2" y="2" width="61" height="52" fill="url(#plasma)" stroke="#111" stroke-width="1.500"/></svg><figcaption>gradient<br>plasma</figcaption></figure>
<figure><svg viewBox="0 0 66 56"><rect x="2" y="2" width="61" height="52" fill="#959595"/></svg><figcaption>gray 3 fill</figcaption></figure>
<figure><svg viewBox="0 0 66 56"><rect x="2" y="2" width="61" height="52" fill="url(#hf)" stroke="#111" stroke-width="1.500"/></svg><figcaption>hashed black /</figcaption></figure>
<figure><svg viewBox="0 0 66 56"><rect x="2" y="2" width="61" height="52" fill="url(#hb)" stroke="#111" stroke-width="1.500"/></svg><figcaption>hashed black \</figcaption></figure>
<figure><svg viewBox="0 0 66 56"><rect x="2" y="2" width="61" height="52" fill="url(#hx)" stroke="#111" stroke-width="1.500"/></svg><figcaption>hashed black<br>X</figcaption></figure>
<figure><svg viewBox="0 0 66 56"><rect x="2" y="2" width="61" height="52" fill="#fff" stroke="#377eb8" stroke-width="3.500"/></svg><figcaption>outline blue</figcaption></figure>
<figure><svg viewBox="0 0 66 56"><rect x="2" y="2" width="61" height="52" fill="#fff" stroke="#4daf4a" stroke-width="3.500"/></svg></figure>
<figure><svg viewBox="0 0 66 56"><rect x="2" y="2" width="61" height="52" fill="#fff" stroke="#e31a1c" stroke-width="3.500"/></svg></figure>
<figure><svg viewBox="0 0 66 56"><rect x="2" y="2" width="61" height="52" fill="#fff" stroke="#888"/><g stroke="#333" stroke-width=".5"><circle cx="2" cy="6" r="3.500" fill="#e31a1c"/><circle cx="2" cy="2" r="4" fill="#4daf4a"/><circle cx="19" cy="2" r="4" fill="#e31a1c"/><circle cx="36" cy="2" r="4" fill="#4daf4a"/><circle cx="53" cy="2" r="4" fill="#e31a1c"/></g></svg></figure>
</div>
<div class="sbar"><button aria-label="Scroll up" class="up"></button><i class="thumb"></i><i class="rest"></i><button aria-label="Scroll down" class="dn"></button></div>
</div>
<div class="actrow"><button class="ib on" aria-label="Icon view"><svg viewBox="0 0 24 24"><rect x="2" y="2" width="20" height="20" fill="#cfe0f3" stroke="#8db1da"/><path d="M5 7h14M5 12h14M5 17h14" stroke="#2f62a8" stroke-width="3" stroke-dasharray="3 2.500"/></svg></button><button class="ib" aria-label="List view"><svg viewBox="0 0 24 24"><use href="#table"/></svg></button><span class="grow"></span><button class="btn">Save Symbol...</button><button class="btn adv">Advanced</button></div>
<div class="rend"><i class="rtri"></i><b>Layer Rendering</b></div>
<div class="apply"><button class="btn sq" aria-label="Undo"><svg viewBox="0 0 24 24"><use href="#undo"/></svg></button><button class="btn sq" aria-label="Redo"><svg viewBox="0 0 24 24"><use href="#redo"/></svg></button><span class="grow"></span><label><input type="checkbox" checked>Live update</label><button class="btn ap"><svg viewBox="0 0 16 16"><use href="#check"/></svg>Apply</button></div>
</div>
</div>
<div class="tabs rtabs"><button>Statistics</button><button class="act">Layer Styling</button></div>
</aside>

<div class="dialog" role="dialog" aria-label="Select Features">
<div class="dtitle"><span>PHL_provinces - Select Features</span><button aria-label="Close dialog"><svg viewBox="0 0 10 10"><path d="M1.500 1.500l7 7M8.500 1.500l-7 7" stroke="#fff" stroke-width="2.200"/></svg></button></div>
<form class="form">
<div class="fr"><label for="f1">fid</label><input type="text" id="f1"><button type="button" class="btn ex">Exclude Field</button></div>
<div class="fr"><label for="f2">province</label><input type="text" id="f2"><label class="cs"><input type="checkbox">Case sensitive</label><button type="button" class="btn ex">Exclude Field</button></div>
<div class="fr"><label for="f3">psgc_province</label><input type="text" id="f3"><label class="cs"><input type="checkbox">Case sensitive</label><button type="button" class="btn ex">Exclude Field</button></div>
<div class="fr"><label for="f4">region</label><input type="text" id="f4"><label class="cs"><input type="checkbox">Case sensitive</label><button type="button" class="btn ex">Exclude Field</button></div>
<div class="fr"><label for="f5">psgc_region</label><input type="text" id="f5"><label class="cs"><input type="checkbox">Case sensitive</label><button type="button" class="btn ex">Exclude Field</button></div>
<div class="fr"><label for="f6">income_class</label><input type="text" id="f6"><label class="cs"><input type="checkbox">Case sensitive</label><button type="button" class="btn ex">Exclude Field</button></div>
<div class="fr"><label for="f7">pop2015</label><input type="text" id="f7"><button type="button" class="btn ex">Exclude Field</button></div>
<div class="fr"><label for="f8">confirmed</label><input type="text" id="f8"><button type="button" class="btn ex">Exclude Field</button></div>
<div class="fr"><label for="f9">deaths</label><span class="inw"><input type="text" id="f9" value="10"><svg class="clr"><use href="#clear"/></svg></span><button type="button" class="btn ex gtb">Greater than (&gt;)</button></div>
<div class="fr"><label for="f10">recoveries</label><input type="text" id="f10"><button type="button" class="btn ex">Exclude Field</button></div>
<div class="fr"><label for="f11">active</label><input type="text" id="f11"><button type="button" class="btn ex">Exclude Field</button></div>
<div class="fr"><label for="f12">admitted</label><input type="text" id="f12"><button type="button" class="btn ex">Exclude Field</button></div>
</form>
<div class="dbtns">
<button class="btn b1"><u>R</u>eset Form</button><button class="btn b2"><u>F</u>lash Features</button><button class="btn b3"><u>Z</u>oom to Features</button><span class="splitb"><button class="btn b4"><svg viewBox="0 0 24 24"><use href="#selv"/></svg><u>S</u>elect Features</button><button class="mini" aria-label="Select menu"></button></span><button class="btn b5">Close</button>
</div>
</div>
</main>

<footer class="status">
<span class="inw loc"><svg class="mg"><use href="#mag"/></svg><input aria-label="Locator" value="histogra"><svg class="clr"><use href="#clear"/></svg></span>
<span class="grow"></span>
<label for="coord">Coordinate</label><input id="coord" class="fld" value="126.24,13.54">
<svg class="trk" viewBox="0 0 16 16"><path d="M2 13l11-11M4 2l9 12" stroke="#333" stroke-width="1.500"/><ellipse cx="5" cy="6" rx="3" ry="4.500" fill="#eee" stroke="#333" transform="rotate(-30 5 6)"/><ellipse cx="11" cy="10" rx="3" ry="4.500" fill="#999" stroke="#333" transform="rotate(-30 11 10)"/></svg>
<label for="scale">Scale</label><span class="combo c-scale"><input id="scale" value="1:7801848"><i class="dv"></i></span>
<svg class="lock" viewBox="0 0 12 15"><path d="M3 8V4.500c0-5 6-5 6 0V8" fill="none" stroke="#999" stroke-width="1.800"/><rect x=".5" y="7" width="11" height="7.500" rx="1" fill="#555"/></svg>
<label for="magn">Magnifier</label><span class="spin s-mag"><input id="magn" value="100%"><span><button aria-label="Up"></button><button aria-label="Down"></button></span></span>
<label for="rotn">Rotation</label><span class="spin s-rotn"><input id="rotn" value="0.0 °"><span><button aria-label="Up"></button><button aria-label="Down"></button></span></span>
<label class="rnd"><input type="checkbox" checked>Render</label>
<button class="crs"><svg viewBox="0 0 14 14"><circle cx="7" cy="7" r="6.500" fill="#777"/><path d="M1 7h12M7 1v12M2.500 3.500c3 2 6 2 9 0M2.500 10.500c3-2 6-2 9 0M7 .500c-4 4-4 9 0 13M7 .500c4 4 4 9 0 13" fill="none" stroke="#ddd" stroke-width=".7"/></svg>EPSG:4326</button>
<button class="msg" aria-label="Messages"><svg viewBox="0 0 16 15"><path d="M8 .500c10 0 10 11 1 12l-4 2.500V12C-2 10-2 .500 8 .500z" fill="#555"/><path d="M4 6.500h2M7 6.500h2M10 6.500h2" stroke="#eee" stroke-width="2"/></svg></button>
</footer>
</div>
</body>
</html>
```
FILE: styles.css
```css
* { box-sizing: border-box; }
body { margin: 0; background: #000; color: #111; font: 13px/16px "DejaVu Sans", sans-serif; }
button, input, select { font: inherit; color: inherit; margin: 0; padding: 0; border: 0; background: none; outline: 0; min-width: 0; }
button { cursor: default; white-space: nowrap; }
i { font-style: normal; }
u { text-decoration: underline; text-underline-offset: 2px; }
.defs { position: absolute; width: 0; height: 0; overflow: hidden; }
.grow { flex: 1; }
.app { min-height: 100vh; display: flex; flex-direction: column; background: #efefef; border-radius: 5px 5px 0 0; overflow: hidden; }

/* window frame */
.titlebar { height: 36px; background: #353535; border-bottom: 1px solid #1c1c1c; display: grid; grid-template-columns: 1fr auto 1fr; align-items: center; color: #f5f5f5; }
.wtitle { grid-column: 2; font: 500 13px/18px "Noto Sans", sans-serif; padding-bottom: 2px; }
.winbtns { display: flex; justify-content: flex-end; gap: 24px; padding-right: 13px; }
.winbtns button { width: 10px; height: 10px; }
.winbtns svg { display: block; width: 10px; height: 10px; }
.menubar { height: 22px; border-bottom: 1px solid #d2d2d2; display: flex; align-items: center; gap: 15px; padding: 0 10px; }
.menubar a { color: inherit; text-decoration: none; }

/* toolbars */
.toolbar { height: 39px; display: flex; align-items: center; padding-left: 1px; background: linear-gradient(#fafafa, #eee); border-bottom: 1px solid #b4b4b4; }
.toolbar.last { height: 38px; }
.grip { width: 16px; height: 22px; flex: none; background: radial-gradient(circle, #aaa 1px, transparent 1px) 8px 0 / 3px 3px; background-clip: content-box; padding: 0 4px 0 8px; }
.grip:first-child { width: 12px; padding-left: 4px; }
.grip.thin { width: 14px; padding-left: 6px; }
.sep { width: 7px; height: 22px; border-left: 1px solid #ccc; margin-left: 2px; margin-right: -2px; flex: none; }
.tb { position: relative; width: 33px; height: 32px; flex: none; display: flex; align-items: center; justify-content: center; border: 1px solid transparent; border-radius: 3px; }
.tb svg { width: 24px; height: 24px; display: block; }
.on { background: #dcdcdc; border: 1px solid #ababab; border-radius: 3px; }
.tb.drop { width: 45px; padding-right: 12px; }
.tb.drop::after { content: ""; position: absolute; right: 3px; top: 13px; border: 4px solid transparent; border-top: 5px solid #555; border-bottom: 0; }
.tb.sub::after { content: ""; position: absolute; right: 0; bottom: 1px; border: 3px solid transparent; border-top: 4px solid #555; border-bottom: 0; }
.dim svg, .dim::after { opacity: .3; filter: grayscale(.8); }
.half { opacity: .4; }
.tx b { width: 24px; height: 24px; font: bold 11px/24px "Noto Sans", sans-serif; text-align: center; overflow: hidden; }
.t-ad { background: #ffb9c6; color: #f00; }
.t-mo { background: #e0e8e2; color: #e2cfd2; }
.t-ro { background: #a49ba6; color: #d2c4b4; }
.t-sc { background: #d5d6c6; color: #9aa59a; }
.t-adj { background: #b8adb0; color: #eee; }
.t-2p { background: #cdd6d7; color: #d5bfc6; }
.t-tm { background: #fafafa; color: #777; }
.t-tp { background: #a5a5a5; color: #fff; }
.t-ex { background: #d3dbca; color: #dba9a9; }

/* inputs */
.combo { position: relative; display: flex; align-items: center; height: 25px; border: 1px solid #aaa; border-radius: 3px; background: linear-gradient(#fff, #f0f0f0); }
.combo::after { content: ""; position: absolute; right: 7px; top: 9px; border: 4px solid transparent; border-top: 5px solid #555; border-bottom: 0; pointer-events: none; }
.combo select { appearance: none; flex: 1; height: 100%; padding-left: 5px; }
.spin { display: flex; height: 24px; border: 1px solid #aaa; border-radius: 3px; background: #fff; }
.spin input { flex: 1; width: 0; padding-left: 5px; }
.spin > span { width: 14px; flex: none; border-left: 1px solid #bbb; display: flex; flex-direction: column; justify-content: space-evenly; align-items: center; }
.spin button { width: 0; height: 0; border: 3px solid transparent; border-top: 0; border-bottom: 4px solid #555; }
.spin button + button { border-bottom: 0; border-top: 4px solid #555; }
.spin .fade { opacity: .4; }
.off { background: #efefef; opacity: .7; }
.s-tol { width: 102px; margin: 0 1px; }
.c-px { width: 109px; margin-right: 1px; }
.s-rot { width: 70px; margin: 0 1px; }
input[type=checkbox] { appearance: none; width: 14px; height: 14px; flex: none; background: #fff; border: 1px solid #bbb; position: relative; }
input[type=checkbox]:checked::after { content: "\2713"; position: absolute; inset: -2px 0 0; font: bold 13px/14px "DejaVu Sans", sans-serif; color: #000; text-align: center; }
.btn { height: 25px; border: 1px solid #aaa; border-radius: 3px; background: linear-gradient(#fff, #efefef); flex: none; }
.clr { width: 13px; height: 10px; flex: none; }
.mg { width: 12px; height: 12px; flex: none; }

/* main area */
.main { flex: 1; position: relative; display: flex; align-items: stretch; }
.side { width: 39px; flex: none; border-right: 1px solid #b4b4b4; background: linear-gradient(90deg, #fafafa, #eee); display: flex; flex-direction: column; align-items: center; padding-top: 5px; }
.side button { height: 32px; }
.side svg { width: 24px; height: 24px; display: block; }
.hgrip { width: 18px; height: 6px; margin-bottom: 2px; background: radial-gradient(circle, #aaa 1px, transparent 1px) 0 0 / 3px 3px; }
.hsep { width: 20px; border-top: 1px solid #ccc; margin: 4px 0 2px; }
.layers { width: 341px; flex: none; display: flex; flex-direction: column; padding: 2px 6px 0 1px; }
.ptitle { display: flex; align-items: center; gap: 2px; height: 18px; padding: 0 1px 0 4px; }
.ptitle span { flex: 1; }
.ptitle svg { width: 12px; height: 12px; display: block; }
.ptools { display: flex; gap: 1px; padding: 3px 0 5px 4px; }
.ptools button { position: relative; width: 24px; height: 23px; display: flex; align-items: center; justify-content: center; }
.ptools svg { width: 16px; height: 16px; }
.ptools .drop { width: 36px; padding-right: 12px; }
.ptools .drop::after { content: ""; position: absolute; right: 3px; top: 9px; border: 4px solid transparent; border-top: 5px solid #555; border-bottom: 0; }
.ltree { flex: 1; background: #fff; border: 1px solid #b4b4b4; font-weight: bold; }
.lrow { display: flex; align-items: center; height: 19px; padding: 0 2px 0 23px; }
.lrow .nm { text-decoration: underline; text-underline-offset: 2px; }
.cur { background: #308cc6; color: #fff; }
.swm { width: 16px; height: 16px; background: #985665; border: 1px solid #6d4050; margin: 0 6px; }
.sheet { width: 14px; height: 16px; margin: 0 7px 0 1px; }
.ind { width: 3px; height: 17px; background: #e8e8e8; margin-left: auto; }
.tabs { display: flex; align-items: flex-start; height: 28px; }
.tabs button { border: 1px solid #b4b4b4; border-top: 0; border-radius: 0 0 3px 3px; background: #dcdcdc; height: 24px; padding: 0 11px; }
.tabs .act { background: #f6f6f6; height: 26px; }
.ltabs { margin-top: 1px; border-top: 1px solid #b4b4b4; }
.canvas { flex: 1; min-width: 0; margin-top: 1px; background: #fff; border: 1px solid #b4b4b4; overflow: hidden; position: relative; }
.map { display: block; width: 100%; height: auto; }
.land path { fill: #c43b3a; stroke: #333; stroke-width: 1px; vector-effect: non-scaling-stroke; stroke-linejoin: round; }
.land .pick { fill: #ff0; }
.lines path { fill: none; stroke: #2a2020; stroke-width: 1px; vector-effect: non-scaling-stroke; stroke-linejoin: round; }
.dots path { fill: none; stroke: #4a2727; stroke-width: 5px; stroke-linecap: round; stroke-dasharray: 2 6; }

/* styling dock */
.dock { width: 415px; flex: none; display: flex; flex-direction: column; padding: 2px 0 0 6px; }
.dock .ptitle { margin-right: 2px; padding: 0 0 0 4px; }
.c-layer { margin: 3px 3px 0; }
.ci17 { width: 17px; height: 13px; margin-left: 5px; flex: none; }
.ci14 { width: 14px; height: 15px; margin-left: 7px; flex: none; }
.combo svg + select { padding-left: 3px; }
.styler { flex: 1; display: flex; margin: 6px 3px 4px; gap: 3px; }
.vtabs { width: 38px; flex: none; background: #5c5c5c; display: flex; flex-direction: column; }
.vtabs button { height: 32px; display: flex; align-items: center; justify-content: center; padding-right: 8px; }
.vtabs .act { background: #efefef; padding-right: 2px; }
.vtabs .act svg { opacity: .75; }
.vtabs svg { width: 22px; height: 22px; }
.sbody { flex: 1; min-width: 0; display: flex; flex-direction: column; }
.symrow { display: flex; height: 130px; padding-top: 6px; }
.prev { flex: 1; display: flex; align-items: center; justify-content: center; padding-top: 6px; }
.prev i { width: 61px; height: 61px; background: #c43b3a; border: 1px solid #222; margin-right: 5px; }
.stree { width: 188px; height: 119px; margin-top: 5px; background: #fff; border: 1px solid #b4b4b4; }
.sr { height: 19px; display: flex; align-items: center; }
.sr .tri { border: 4px solid transparent; border-top: 5px solid #123; border-bottom: 0; margin-left: 6px; }
.sr .swm { margin: 0 6px 0 9px; }
.sr.ch { padding-left: 43px; gap: 6px; }
.sw { width: 16px; height: 16px; background: #c43b3a; border: 1px solid #7a2525; }
.sbtns { display: grid; grid-template-columns: 28px 28px; grid-auto-rows: 24px; gap: 4px 6px; margin-left: 6px; }
.sbtns button { border: 1px solid #b0b0b0; border-radius: 3px; background: linear-gradient(#fff, #f0f0f0); display: flex; align-items: center; justify-content: center; }
.sbtns svg { width: 16px; height: 16px; }
.sbtns .dimb { border-color: #ccc; }
.dimb svg { opacity: .3; }
hr { width: 100%; margin: 11px 0 8px; border: 0; border-top: 1px solid #a8a8a8; border-bottom: 1px solid #fff; }
hr.short { width: auto; margin: 0 9px 6px 0; }
.props { display: grid; grid-template-columns: 50px 1fr; margin-right: 9px; row-gap: 1px; align-items: center; }
.oprow { display: flex; align-items: center; gap: 4px; }
input[type=range] { appearance: none; flex: 1; height: 14px; }
input[type=range]::-webkit-slider-runnable-track { height: 5px; background: #3a9ddb; border: 1px solid #1e6a9c; border-radius: 3px; }
input[type=range]::-webkit-slider-thumb { appearance: none; width: 13px; height: 13px; margin-top: -5px; background: #fafafa; border: 1px solid #aaa; border-radius: 3px; }
.s-op { width: 100px; }
.colrow { display: flex; }
.colbtn { flex: 1; height: 27px; padding: 5px 4px; border: 1px solid #b0b0b0; border-radius: 3px; background: #fcfcfc; }
.colbtn i { display: block; height: 16px; border-radius: 3px; background: #c43b3a; }
.mini { position: relative; width: 12px; border: 1px solid #b0b0b0; border-radius: 3px; background: linear-gradient(#fff, #efefef); }
.mini::after { content: ""; position: absolute; left: 1px; top: 10px; border: 4px solid transparent; border-top: 5px solid #555; border-bottom: 0; }
.stretch { flex: 1; }
.favrow { display: flex; align-items: center; margin-right: 9px; gap: 10px; }
.fav { flex: 1; background: #fff; }
.fav .mg { margin: 0 7px 0 10px; }
.fav input { flex: 1; }
.fav .clr { margin-right: 9px; }
.dv { width: 20px; height: 100%; border-left: 1px solid #bbb; }
.plain { width: 20px; height: 18px; }
.plain svg { width: 17px; height: 17px; display: block; }
.gallery { display: flex; height: 264px; margin: 4px 9px 0 0; background: #fff; border: 1px solid #b4b4b4; }
.gal { flex: 1; overflow: hidden; display: grid; grid-template-columns: repeat(3, 101px); grid-auto-rows: 119px; padding: 19px 0 0 2px; font-size: 12px; line-height: 15px; align-content: start; }
.gal figure { margin: 0; display: flex; flex-direction: column; align-items: center; text-align: center; }
.gal svg { width: 66px; height: 56px; flex: none; overflow: visible; }
.gal figcaption { margin-top: 15px; white-space: nowrap; }
.sbar { width: 14px; border-left: 1px solid #b4b4b4; display: flex; flex-direction: column; background: #fafafa; }
.sbar button { height: 14px; display: flex; align-items: center; justify-content: center; }
.sbar button::after { content: ""; border: 4px solid transparent; border-bottom: 5px solid #555; border-top: 0; }
.sbar .dn::after { border-bottom: 0; border-top: 5px solid #555; }
.thumb { flex: 30; border: solid #b4b4b4; border-width: 1px 0; }
.rest { flex: 39; background: #e2e2e2; border-bottom: 1px solid #b4b4b4; }
.actrow { display: flex; align-items: center; margin: 6px 9px 0 0; }
.ib { width: 24px; height: 23px; display: flex; align-items: center; justify-content: center; }
.ib svg, .sq svg { width: 16px; height: 16px; display: block; }
.actrow .btn { width: 106px; }
.actrow .adv { width: 85px; position: relative; padding-right: 14px; margin-left: 6px; }
.adv::after { content: ""; position: absolute; right: 4px; top: 10px; border: 3px solid transparent; border-top: 4px solid #666; border-bottom: 0; }
.rend { display: flex; align-items: center; height: 45px; gap: 10px; padding: 16px 0 0 5px; }
.rtri { border: 5px solid transparent; border-left: 8px solid #333; border-right: 0; }
.apply { display: flex; align-items: center; gap: 6px; }
.sq { width: 24px; height: 23px; display: flex; align-items: center; justify-content: center; }
.apply label { display: flex; align-items: center; gap: 5px; margin-right: 7px; }
.ap { width: 80px; display: flex; align-items: center; justify-content: center; }
.ap svg { width: 16px; height: 16px; }
.rtabs { border-top: 1px solid #b4b4b4; }

/* select features dialog */
.dialog { position: absolute; left: 915px; top: 85px; width: 584px; background: #efefef; border: 1px solid #777; border-top: 0; border-radius: 6px 6px 0 0; box-shadow: 0 4px 18px rgba(0, 0, 0, .55); }
.dtitle { position: relative; height: 38px; margin: 0 -1px; border-radius: 6px 6px 0 0; background: #353535; border-bottom: 1px solid #1c1c1c; color: #f5f5f5; display: flex; align-items: center; justify-content: center; font: 500 13px/18px "Noto Sans", sans-serif; }
.dtitle button { position: absolute; right: 9px; top: 9px; width: 19px; height: 19px; border-radius: 10px; background: #f28b2b; display: flex; align-items: center; justify-content: center; }
.dtitle svg { width: 10px; height: 10px; }
.form { display: flex; flex-direction: column; gap: 6px; padding: 18px 18px 0; }
.fr { display: flex; align-items: center; gap: 6px; height: 25px; }
.fr > label:first-child { width: 94px; flex: none; }
.fr input[type=text] { flex: 1; height: 25px; padding-left: 2px; background: #fff; border: 1px solid #aaa; border-radius: 3px; }
.cs { display: flex; align-items: center; gap: 5px; width: 119px; flex: none; white-space: nowrap; }
.ex { position: relative; width: 103px; height: 24px; }
.ex::after { content: ""; position: absolute; right: 1px; bottom: 2px; border: 3px solid transparent; border-top: 4px solid #555; border-bottom: 0; }
.gtb { width: 125px; }
.inw { flex: 1; display: flex; align-items: center; height: 25px; background: #fff; border: 1px solid #aaa; border-radius: 3px; }
.inw .clr { margin-right: 8px; }
.fr .inw input { border: 0; height: 23px; }
.dbtns { display: flex; gap: 6px; padding: 39px 9px 9px 8px; }
.b1 { width: 83px; }
.b2 { width: 103px; }
.b3 { width: 124px; }
.b4 { width: 138px; display: flex; align-items: center; padding-left: 4px; }
.b4 svg { width: 14px; height: 16px; margin-right: 3px; }
.b5 { width: 80px; }
.splitb { display: flex; }

/* status bar */
.status { height: 31px; display: flex; align-items: center; padding: 0 7px 0 4px; font-size: 11px; }
.loc { flex: none; width: 270px; font-size: 13px; }
.loc .mg { margin: 0 8px; }
.loc input { flex: 1; }
.status > label { margin-right: 6px; }
.fld { width: 90px; height: 21px; text-align: center; background: #fff; border: 1px solid #aaa; border-radius: 3px; }
.trk { width: 16px; height: 16px; margin: 0 12px 0 4px; }
.c-scale { width: 96px; height: 24px; background: #fff; }
.c-scale input { flex: 1; padding-left: 4px; }
.lock { width: 12px; height: 15px; margin: 0 9px 0 13px; }
.s-mag { width: 98px; height: 23px; margin-right: 8px; }
.s-rotn { width: 94px; height: 23px; margin-right: 6px; }
.rnd { display: flex; align-items: center; gap: 5px; }
.crs { display: flex; align-items: center; gap: 3px; margin: 0 24px 0 9px; }
.crs svg { width: 14px; height: 14px; }
.msg svg { width: 16px; height: 15px; display: block; }
```
